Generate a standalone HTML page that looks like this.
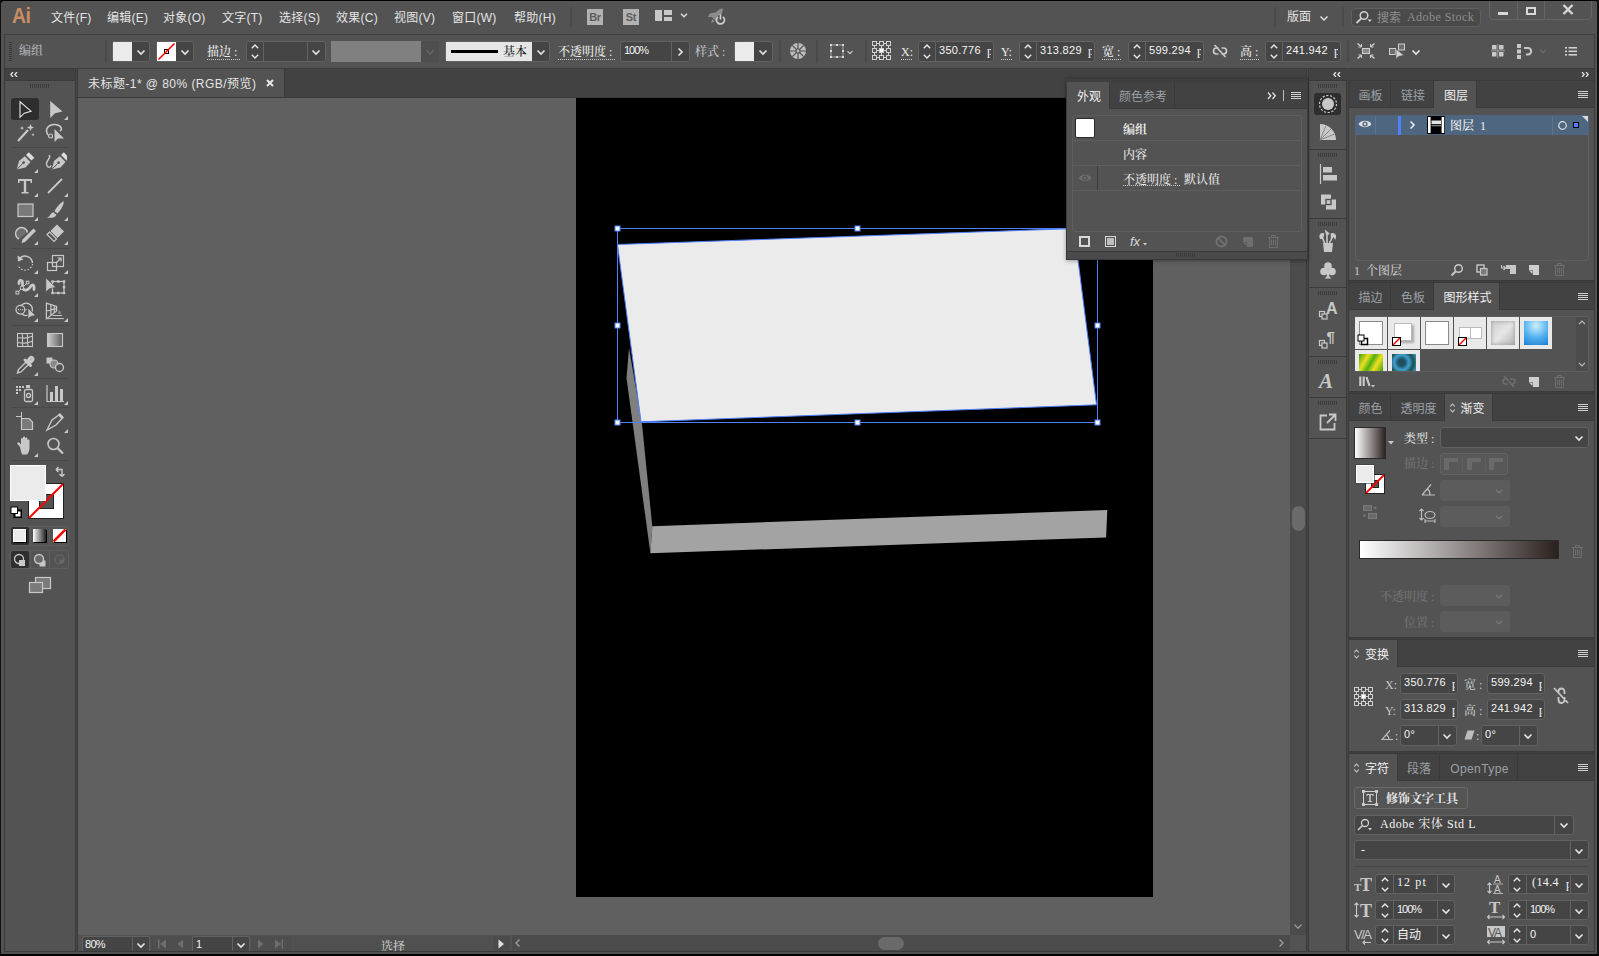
<!DOCTYPE html>
<html lang="zh-CN"><head><meta charset="utf-8"><title>Adobe Illustrator</title>
<style>
html,body{margin:0;padding:0;}
body{width:1599px;height:956px;overflow:hidden;background:#535353;position:relative;}
#root{position:absolute;left:0;top:0;width:1599px;height:956px;overflow:hidden;background:#535353;}
#root div,#root svg{position:absolute;}
#root div{white-space:nowrap;}
.fs{font-family:"Liberation Sans","Noto Sans CJK SC",sans-serif;}
.fr{font-family:"Liberation Serif","Noto Serif CJK SC",serif;font-weight:500;}
.fm{font-family:"Liberation Mono","Noto Sans CJK SC",monospace;}
.u{border-bottom:1px dotted #bbb;}
</style></head>
<body><div id="root">
<div style="left:78px;top:98px;width:1212px;height:838px;background:#606060;"></div>
<div style="left:4px;top:68px;width:1591px;height:30px;background:#424242;"></div>
<div class="fs" style="left:12px;top:3px;font-size:22px;line-height:26px;color:#c98d63;font-weight:bold;letter-spacing:-0.5px;transform:scaleX(0.88);transform-origin:0 0;">Ai</div>
<div class="fs" style="left:51px;top:10px;font-size:12px;line-height:17px;color:#e4e4e4;letter-spacing:0.250px;">文件(F)</div>
<div class="fs" style="left:107px;top:10px;font-size:12px;line-height:17px;color:#e4e4e4;letter-spacing:0.250px;">编辑(E)</div>
<div class="fs" style="left:163px;top:10px;font-size:12px;line-height:17px;color:#e4e4e4;letter-spacing:0.250px;">对象(O)</div>
<div class="fs" style="left:222px;top:10px;font-size:12px;line-height:17px;color:#e4e4e4;letter-spacing:0.250px;">文字(T)</div>
<div class="fs" style="left:279px;top:10px;font-size:12px;line-height:17px;color:#e4e4e4;letter-spacing:0.250px;">选择(S)</div>
<div class="fs" style="left:336px;top:10px;font-size:12px;line-height:17px;color:#e4e4e4;letter-spacing:0.250px;">效果(C)</div>
<div class="fs" style="left:394px;top:10px;font-size:12px;line-height:17px;color:#e4e4e4;letter-spacing:0.250px;">视图(V)</div>
<div class="fs" style="left:452px;top:10px;font-size:12px;line-height:17px;color:#e4e4e4;letter-spacing:0.250px;">窗口(W)</div>
<div class="fs" style="left:514px;top:10px;font-size:12px;line-height:17px;color:#e4e4e4;letter-spacing:0.250px;">帮助(H)</div>
<div style="left:570px;top:7px;width:2px;height:20px;background:#4a4a4a;"></div>
<div style="left:587px;top:9px;width:16px;height:16px;background:#b2b2b2;"></div>
<div class="fs" style="left:587px;top:9px;font-size:11px;line-height:17px;color:#5e5e5e;width:16px;text-align:center;font-weight:bold;letter-spacing:-0.3px;">Br</div>
<div style="left:623px;top:9px;width:16px;height:16px;background:#b2b2b2;"></div>
<div class="fs" style="left:623px;top:9px;font-size:11px;line-height:17px;color:#5e5e5e;width:16px;text-align:center;font-weight:bold;letter-spacing:-0.3px;">St</div>
<svg style="left:655px;top:10px;" width="17" height="11" viewBox="0 0 17 11"><rect x="0" y="0" width="7" height="11" fill="#c8c8c8"/><rect x="9" y="0" width="8" height="5" fill="#c8c8c8"/><rect x="9" y="7" width="8" height="4" fill="#c8c8c8"/></svg>
<svg style="left:678px;top:10px;" width="12" height="10" viewBox="0 0 12 10"><path d="M3 3.8 L6 6.8 L9 3.8" fill="none" stroke="#e0e0e0" stroke-width="1.4"/></svg>
<svg style="left:704px;top:7px;" width="24" height="20" viewBox="0 0 24 20"><g fill="#8c8c8c" transform="rotate(38 12 10)"><path d="M12 -1 C15 2 15.500 8 14.500 13 H9.500 C8.500 8 9 2 12 -1Z"/><path d="M9.300 6 L5 11 L5.500 15 L9.500 12Z"/><path d="M14.700 6 L19 11 L18.500 15 L14.500 12Z"/><path d="M10.500 14 H13.500 L12 18Z"/></g><circle cx="16.5" cy="12.5" r="4.6" fill="#535353"/><g fill="none" stroke="#cfcfcf" stroke-width="1.6"><path d="M14 9.8 A4 4 0 1 0 19 9.8"/><path d="M16.5 7.5 V12.5"/></g></svg>
<div style="left:1274px;top:7px;width:2px;height:20px;background:#4a4a4a;"></div>
<div class="fs" style="left:1287px;top:9px;font-size:12px;line-height:17px;color:#e4e4e4;">版面</div>
<svg style="left:1318px;top:13px;" width="12" height="10" viewBox="0 0 12 10"><path d="M2.5 3.55 L6 7.05 L9.5 3.55" fill="none" stroke="#e0e0e0" stroke-width="1.5"/></svg>
<div style="left:1342px;top:7px;width:2px;height:20px;background:#4a4a4a;"></div>
<div style="left:1351px;top:8px;width:130px;height:19px;background:#4a4a4a;border:1px solid #606060;box-sizing:border-box;border-radius:4px;"></div>
<svg style="left:1355px;top:10px;" width="18" height="15" viewBox="0 0 18 15"><circle cx="9" cy="5.5" r="3.8" fill="none" stroke="#d0d0d0" stroke-width="1.5"/><path d="M6.3 8.3 L1.5 13" stroke="#d0d0d0" stroke-width="1.8"/><path d="M12.5 9.5 H17 L14.75 12 Z" fill="#d0d0d0"/></svg>
<div class="fs" style="left:1377px;top:10px;font-size:12px;line-height:17px;color:#8e8e8e;">搜索</div>
<div class="fr" style="left:1407px;top:9px;font-size:12px;line-height:17px;color:#8e8e8e;letter-spacing:0.450px;font-weight:400;">Adobe Stock</div>
<div style="left:1489px;top:-4px;width:103px;height:24px;border:1px solid #656565;box-sizing:border-box;border-radius:4px;"></div>
<div style="left:1517px;top:0px;width:1px;height:19px;background:#656565;"></div>
<div style="left:1544px;top:0px;width:1px;height:19px;background:#656565;"></div>
<div style="left:1498px;top:12px;width:10px;height:3px;background:#d8d8d8;"></div>
<div style="left:1526px;top:7px;width:10px;height:8px;border:2px solid #d8d8d8;box-sizing:border-box;"></div>
<svg style="left:1562px;top:4px;" width="12" height="11" viewBox="0 0 12 11"><path d="M1.5 1 L10.5 10 M10.5 1 L1.5 10" stroke="#d8d8d8" stroke-width="2.4"/></svg>
<div style="left:4px;top:34px;width:1591px;height:35px;background:#535353;border:1px solid #3e3e3e;box-sizing:border-box;"></div>
<svg style="left:9px;top:42px;" width="4" height="20" viewBox="0 0 4 20"><rect x="0" y="0" width="3" height="1" fill="#3a3a3a"/><rect x="0" y="2" width="3" height="1" fill="#3a3a3a"/><rect x="0" y="4" width="3" height="1" fill="#3a3a3a"/><rect x="0" y="6" width="3" height="1" fill="#3a3a3a"/><rect x="0" y="8" width="3" height="1" fill="#3a3a3a"/><rect x="0" y="10" width="3" height="1" fill="#3a3a3a"/><rect x="0" y="12" width="3" height="1" fill="#3a3a3a"/><rect x="0" y="14" width="3" height="1" fill="#3a3a3a"/><rect x="0" y="16" width="3" height="1" fill="#3a3a3a"/><rect x="0" y="18" width="3" height="1" fill="#3a3a3a"/></svg>
<div class="fr" style="left:19px;top:43px;font-size:12px;line-height:17px;color:#b4b8bd;">编组</div>
<div style="left:105px;top:40px;width:2px;height:23px;background:#4a4a4a;"></div>
<div style="left:112px;top:41px;width:38px;height:21px;background:#454545;border:1px solid #626262;box-sizing:border-box;border-radius:3px;"></div>
<div style="left:113px;top:42px;width:19px;height:19px;background:#ebebeb;"></div>
<svg style="left:135px;top:46.5px;" width="12" height="10" viewBox="0 0 12 10"><path d="M2.5 3.55 L6 7.05 L9.5 3.55" fill="none" stroke="#e6e6e6" stroke-width="1.6"/></svg>
<div style="left:156px;top:41px;width:38px;height:21px;background:#454545;border:1px solid #626262;box-sizing:border-box;border-radius:3px;"></div>
<div style="left:157px;top:42px;width:19px;height:19px;background:#ffffff;"></div>
<svg style="left:157px;top:42px;" width="19" height="19" viewBox="0 0 19 19"><rect x="7.5" y="7.5" width="4" height="4" fill="none" stroke="#000" stroke-width="1"/><path d="M1.5 17.5 L17.5 1.5" stroke="#f00" stroke-width="1.6"/></svg>
<svg style="left:179px;top:46.5px;" width="12" height="10" viewBox="0 0 12 10"><path d="M2.5 3.55 L6 7.05 L9.5 3.55" fill="none" stroke="#e6e6e6" stroke-width="1.6"/></svg>
<div class="fr" style="left:207px;top:44px;font-size:12px;line-height:17px;color:#ececec;">描边 :</div>
<div style="left:207px;top:59px;width:33px;height:0;border-top:1px dotted #c8c8c8;"></div>
<div style="left:246px;top:41px;width:80px;height:21px;background:#454545;border:1px solid #626262;box-sizing:border-box;border-radius:3px;"></div>
<div style="left:263px;top:42px;width:1px;height:19px;background:#626262;"></div>
<div style="left:307px;top:42px;width:1px;height:19px;background:#626262;"></div>
<svg style="left:248.5px;top:42.0px;" width="12" height="10" viewBox="0 0 12 10"><path d="M2.8 6.3 L6 3.1 L9.2 6.3" fill="none" stroke="#e6e6e6" stroke-width="1.4"/></svg>
<svg style="left:248.5px;top:51.0px;" width="12" height="10" viewBox="0 0 12 10"><path d="M2.8 3.6999999999999997 L6 6.8999999999999995 L9.2 3.6999999999999997" fill="none" stroke="#e6e6e6" stroke-width="1.4"/></svg>
<svg style="left:310px;top:46.5px;" width="12" height="10" viewBox="0 0 12 10"><path d="M2.5 3.55 L6 7.05 L9.5 3.55" fill="none" stroke="#e6e6e6" stroke-width="1.6"/></svg>
<div style="left:331px;top:41px;width:90px;height:21px;background:#808080;"></div>
<div style="left:421px;top:41px;width:18px;height:21px;background:#4e4e4e;border-radius:2px;"></div>
<svg style="left:424px;top:46.5px;" width="12" height="10" viewBox="0 0 12 10"><path d="M2.5 3.55 L6 7.05 L9.5 3.55" fill="none" stroke="#666" stroke-width="1.6"/></svg>
<div style="left:445px;top:41px;width:105px;height:21px;background:#454545;border:1px solid #626262;box-sizing:border-box;border-radius:3px;"></div>
<div style="left:446px;top:42px;width:86px;height:19px;background:#e6e6e6;"></div>
<div style="left:451px;top:50px;width:47px;height:3px;background:#000;"></div>
<div class="fr" style="left:503px;top:44px;font-size:12px;line-height:17px;color:#1a1a1a;">基本</div>
<svg style="left:535px;top:46.5px;" width="12" height="10" viewBox="0 0 12 10"><path d="M2.5 3.55 L6 7.05 L9.5 3.55" fill="none" stroke="#e6e6e6" stroke-width="1.6"/></svg>
<div class="fr" style="left:558px;top:44px;font-size:12px;line-height:17px;color:#ececec;">不透明度 :</div>
<div style="left:558px;top:59px;width:57px;height:0;border-top:1px dotted #c8c8c8;"></div>
<div style="left:620px;top:41px;width:70px;height:21px;background:#454545;border:1px solid #626262;box-sizing:border-box;border-radius:3px;"></div>
<div style="left:671px;top:42px;width:1px;height:19px;background:#626262;"></div>
<div class="fs" style="left:624px;top:42px;font-size:11px;line-height:16px;color:#f4f4f4;letter-spacing:-1px;">100%</div>
<svg style="left:675px;top:45.5px;" width="10" height="12" viewBox="0 0 10 12"><path d="M3.55 2.5 L7.05 6 L3.55 9.5" fill="none" stroke="#e6e6e6" stroke-width="1.6"/></svg>
<div class="fr" style="left:695px;top:44px;font-size:12px;line-height:17px;color:#c4c8cc;">样式 :</div>
<div style="left:734px;top:41px;width:39px;height:21px;background:#454545;border:1px solid #626262;box-sizing:border-box;border-radius:3px;"></div>
<div style="left:735px;top:42px;width:19px;height:19px;background:#ebebeb;"></div>
<svg style="left:757px;top:46.5px;" width="12" height="10" viewBox="0 0 12 10"><path d="M2.5 3.55 L6 7.05 L9.5 3.55" fill="none" stroke="#e6e6e6" stroke-width="1.6"/></svg>
<div style="left:779px;top:40px;width:2px;height:23px;background:#4a4a4a;"></div>
<svg style="left:789px;top:42px;" width="18" height="18" viewBox="0 0 18 18"><circle cx="9" cy="9" r="8" fill="#bdbdbd"/><g stroke="#535353" stroke-width="1.2" fill="none"><circle cx="9" cy="9" r="2"/><path d="M9 1 V7 M9 11 V17 M1 9 H7 M11 9 H17 M3.3 3.3 L7.5 7.5 M14.7 3.3 L10.5 7.5 M3.3 14.7 L7.5 10.5 M14.7 14.7 L10.5 10.5"/></g></svg>
<div style="left:816px;top:40px;width:2px;height:23px;background:#4a4a4a;"></div>
<div style="left:865px;top:40px;width:2px;height:23px;background:#4a4a4a;"></div>
<svg style="left:829px;top:43px;" width="16" height="16" viewBox="0 0 16 16"><rect x="2" y="2" width="12" height="12" fill="none" stroke="#c4c4c4" stroke-width="0.8"/><g fill="#d6d6d6"><rect x="1" y="1" width="2" height="2"/><rect x="1" y="7" width="2" height="2"/><rect x="1" y="13" width="2" height="2"/><rect x="7" y="1" width="2" height="2"/><rect x="7" y="13" width="2" height="2"/><rect x="13" y="1" width="2" height="2"/><rect x="13" y="7" width="2" height="2"/><rect x="13" y="13" width="2" height="2"/></g></svg>
<svg style="left:844px;top:47px;" width="12" height="10" viewBox="0 0 12 10"><path d="M3.5 4.05 L6 6.55 L8.5 4.05" fill="none" stroke="#d0d0d0" stroke-width="1.2"/></svg>
<svg style="left:872px;top:41px;" width="19" height="19" viewBox="0 0 19 19"><path d="M5 2.5 H7 M12 2.5 H14 M2.5 5 V7 M2.5 12 V14" stroke="#d0d0d0" stroke-width="1"/><path d="M5 9.5 H7 M12 9.5 H14 M9.5 5 V7 M9.5 12 V14" stroke="#d0d0d0" stroke-width="1"/><path d="M5 16.5 H7 M12 16.5 H14 M16.5 5 V7 M16.5 12 V14" stroke="#d0d0d0" stroke-width="1"/><rect x="0.5" y="0.5" width="4" height="4" fill="none" stroke="#d0d0d0" stroke-width="1"/><rect x="7.5" y="0.5" width="4" height="4" fill="none" stroke="#d0d0d0" stroke-width="1"/><rect x="14.5" y="0.5" width="4" height="4" fill="none" stroke="#d0d0d0" stroke-width="1"/><rect x="0.5" y="7.5" width="4" height="4" fill="none" stroke="#d0d0d0" stroke-width="1"/><rect x="7.5" y="7.5" width="4" height="4" fill="none" stroke="#d0d0d0" stroke-width="1"/><rect x="8.0" y="8.0" width="3" height="3" fill="#fff"/><rect x="14.5" y="7.5" width="4" height="4" fill="none" stroke="#d0d0d0" stroke-width="1"/><rect x="0.5" y="14.5" width="4" height="4" fill="none" stroke="#d0d0d0" stroke-width="1"/><rect x="7.5" y="14.5" width="4" height="4" fill="none" stroke="#d0d0d0" stroke-width="1"/><rect x="14.5" y="14.5" width="4" height="4" fill="none" stroke="#d0d0d0" stroke-width="1"/></svg>
<div class="fr" style="left:901px;top:44px;font-size:12px;line-height:17px;color:#ececec;">X:</div>
<div style="left:901px;top:59px;width:11px;height:0;border-top:1px dotted #c8c8c8;"></div>
<div style="left:918px;top:41px;width:76px;height:21px;background:#454545;border:1px solid #626262;box-sizing:border-box;border-radius:3px;"></div>
<div style="left:935px;top:42px;width:1px;height:19px;background:#626262;"></div>
<svg style="left:921px;top:42.0px;" width="12" height="10" viewBox="0 0 12 10"><path d="M2.8 6.3 L6 3.1 L9.2 6.3" fill="none" stroke="#e6e6e6" stroke-width="1.4"/></svg>
<svg style="left:921px;top:51.0px;" width="12" height="10" viewBox="0 0 12 10"><path d="M2.8 3.6999999999999997 L6 6.8999999999999995 L9.2 3.6999999999999997" fill="none" stroke="#e6e6e6" stroke-width="1.4"/></svg>
<div class="fs" style="left:939px;top:42px;font-size:11px;line-height:16px;color:#f4f4f4;letter-spacing:0.3px;">350.776</div>
<div class="fr" style="left:987px;top:43px;width:4px;height:16px;overflow:hidden;font-size:12px;line-height:16px;color:#f4f4f4;font-weight:500;">px</div>
<div class="fr" style="left:1001px;top:44px;font-size:12px;line-height:17px;color:#ececec;">Y:</div>
<div style="left:1001px;top:59px;width:11px;height:0;border-top:1px dotted #c8c8c8;"></div>
<div style="left:1019px;top:41px;width:76px;height:21px;background:#454545;border:1px solid #626262;box-sizing:border-box;border-radius:3px;"></div>
<div style="left:1036px;top:42px;width:1px;height:19px;background:#626262;"></div>
<svg style="left:1022px;top:42.0px;" width="12" height="10" viewBox="0 0 12 10"><path d="M2.8 6.3 L6 3.1 L9.2 6.3" fill="none" stroke="#e6e6e6" stroke-width="1.4"/></svg>
<svg style="left:1022px;top:51.0px;" width="12" height="10" viewBox="0 0 12 10"><path d="M2.8 3.6999999999999997 L6 6.8999999999999995 L9.2 3.6999999999999997" fill="none" stroke="#e6e6e6" stroke-width="1.4"/></svg>
<div class="fs" style="left:1040px;top:42px;font-size:11px;line-height:16px;color:#f4f4f4;letter-spacing:0.3px;">313.829</div>
<div class="fr" style="left:1088px;top:43px;width:4px;height:16px;overflow:hidden;font-size:12px;line-height:16px;color:#f4f4f4;font-weight:500;">px</div>
<div class="fr" style="left:1102px;top:44px;font-size:12px;line-height:17px;color:#ececec;">宽 :</div>
<div style="left:1102px;top:59px;width:19px;height:0;border-top:1px dotted #c8c8c8;"></div>
<div style="left:1128px;top:41px;width:76px;height:21px;background:#454545;border:1px solid #626262;box-sizing:border-box;border-radius:3px;"></div>
<div style="left:1145px;top:42px;width:1px;height:19px;background:#626262;"></div>
<svg style="left:1131px;top:42.0px;" width="12" height="10" viewBox="0 0 12 10"><path d="M2.8 6.3 L6 3.1 L9.2 6.3" fill="none" stroke="#e6e6e6" stroke-width="1.4"/></svg>
<svg style="left:1131px;top:51.0px;" width="12" height="10" viewBox="0 0 12 10"><path d="M2.8 3.6999999999999997 L6 6.8999999999999995 L9.2 3.6999999999999997" fill="none" stroke="#e6e6e6" stroke-width="1.4"/></svg>
<div class="fs" style="left:1149px;top:42px;font-size:11px;line-height:16px;color:#f4f4f4;letter-spacing:0.3px;">599.294</div>
<div class="fr" style="left:1197px;top:43px;width:4px;height:16px;overflow:hidden;font-size:12px;line-height:16px;color:#f4f4f4;font-weight:500;">px</div>
<svg style="left:1212px;top:44px;" width="16" height="14" viewBox="0 0 16 14"><g fill="none" stroke="#c8c8c8" stroke-width="1.700"><path d="M6.500 4 H4.500 a3 3 0 0 0 0 6 H6.500"/><path d="M9.500 4 H11.500 a3 3 0 0 1 0 6 H9.500"/><path d="M2.500 1 L13.500 13"/></g></svg>
<div class="fr" style="left:1240px;top:44px;font-size:12px;line-height:17px;color:#ececec;">高 :</div>
<div style="left:1240px;top:59px;width:19px;height:0;border-top:1px dotted #c8c8c8;"></div>
<div style="left:1265px;top:41px;width:76px;height:21px;background:#454545;border:1px solid #626262;box-sizing:border-box;border-radius:3px;"></div>
<div style="left:1282px;top:42px;width:1px;height:19px;background:#626262;"></div>
<svg style="left:1268px;top:42.0px;" width="12" height="10" viewBox="0 0 12 10"><path d="M2.8 6.3 L6 3.1 L9.2 6.3" fill="none" stroke="#e6e6e6" stroke-width="1.4"/></svg>
<svg style="left:1268px;top:51.0px;" width="12" height="10" viewBox="0 0 12 10"><path d="M2.8 3.6999999999999997 L6 6.8999999999999995 L9.2 3.6999999999999997" fill="none" stroke="#e6e6e6" stroke-width="1.4"/></svg>
<div class="fs" style="left:1286px;top:42px;font-size:11px;line-height:16px;color:#f4f4f4;letter-spacing:0.3px;">241.942</div>
<div class="fr" style="left:1334px;top:43px;width:4px;height:16px;overflow:hidden;font-size:12px;line-height:16px;color:#f4f4f4;font-weight:500;">px</div>
<div style="left:1347px;top:40px;width:2px;height:23px;background:#4a4a4a;"></div>
<svg style="left:1357px;top:43px;" width="18" height="16" viewBox="0 0 18 16"><rect x="5.500" y="5.500" width="7" height="5" fill="#8a8a8a" stroke="#d0d0d0"/><path d="M0.500 0.500 L4 3.500 M17.500 0.500 L14 3.500 M0.500 15.500 L4 12.500 M17.500 15.500 L14 12.500" stroke="#d0d0d0" stroke-width="1.400"/><path d="M1.500 4 H4.500 V1 M16.500 4 H13.500 V1 M1.500 12 H4.500 V15 M16.500 12 H13.500 V15" stroke="#d0d0d0" stroke-width="1" fill="none"/></svg>
<svg style="left:1389px;top:43px;" width="17" height="17" viewBox="0 0 17 17"><rect x="0.500" y="5.500" width="6" height="6" fill="#6e6e6e" stroke="#d0d0d0"/><rect x="9.500" y="1" width="6" height="6" fill="#6e6e6e" stroke="#d0d0d0"/><path d="M7 6 V16 L9.500 13.500 L15 12.300 Z" fill="#d0d0d0" stroke="#535353" stroke-width="0.600"/></svg>
<svg style="left:1410px;top:46.5px;" width="12" height="10" viewBox="0 0 12 10"><path d="M2.5 3.55 L6 7.05 L9.5 3.55" fill="none" stroke="#e6e6e6" stroke-width="1.6"/></svg>
<svg style="left:1491px;top:44px;" width="14" height="14" viewBox="0 0 14 14"><g fill="#c8c8c8"><rect x="1" y="1" width="4.5" height="4.5"/><rect x="8" y="1" width="4.5" height="4.5"/><rect x="1" y="8" width="4.5" height="4.5"/><rect x="8" y="8" width="4.5" height="4.5"/></g><path d="M6.75 0 V14 M0 6.75 H14" stroke="#c8c8c8" stroke-width="0.6"/></svg>
<svg style="left:1517px;top:44px;" width="16" height="15" viewBox="0 0 16 15"><g fill="#c8c8c8"><rect x="0" y="0" width="4" height="4"/><rect x="0" y="5.5" width="4" height="4"/><rect x="0" y="11" width="4" height="4"/></g><path d="M7 4 H11 a3.2 3.2 0 0 1 0 6.4 H9" fill="none" stroke="#c8c8c8" stroke-width="2"/></svg>
<svg style="left:1537px;top:46px;" width="12" height="10" viewBox="0 0 12 10"><path d="M3 3.8 L6 6.8 L9 3.8" fill="none" stroke="#6a6a6a" stroke-width="1.3"/></svg>
<svg style="left:1565px;top:47px;" width="13" height="9" viewBox="0 0 13 9"><rect x="0" y="0.0" width="2" height="1.6" fill="#d0d0d0"/><rect x="3.5" y="0.0" width="8.5" height="1.6" fill="#d0d0d0"/><rect x="0" y="3.5" width="2" height="1.6" fill="#d0d0d0"/><rect x="3.5" y="3.5" width="8.5" height="1.6" fill="#d0d0d0"/><rect x="0" y="7.0" width="2" height="1.6" fill="#d0d0d0"/><rect x="3.5" y="7.0" width="8.5" height="1.6" fill="#d0d0d0"/></svg>
<div style="left:4px;top:68px;width:72px;height:884px;background:#535353;border:1px solid #3a3a3a;box-sizing:border-box;"></div>
<div style="left:5px;top:69px;width:70px;height:11px;background:#424242;"></div>
<div style="left:5px;top:80px;width:70px;height:1px;background:#3a3a3a;"></div>
<svg style="left:10px;top:72px;" width="8" height="5" viewBox="0 0 8 5"><path d="M3 0 L0.8 2.5 L3 5 M7 0 L4.8 2.5 L7 5" fill="none" stroke="#e0e0e0" stroke-width="1.3"/></svg>
<svg style="left:30px;top:84px;" width="20" height="4" viewBox="0 0 20 4"><rect x="0" y="0" width="1" height="4" fill="#3c3c3c"/><rect x="2" y="0" width="1" height="4" fill="#3c3c3c"/><rect x="4" y="0" width="1" height="4" fill="#3c3c3c"/><rect x="6" y="0" width="1" height="4" fill="#3c3c3c"/><rect x="8" y="0" width="1" height="4" fill="#3c3c3c"/><rect x="10" y="0" width="1" height="4" fill="#3c3c3c"/><rect x="12" y="0" width="1" height="4" fill="#3c3c3c"/><rect x="14" y="0" width="1" height="4" fill="#3c3c3c"/><rect x="16" y="0" width="1" height="4" fill="#3c3c3c"/><rect x="18" y="0" width="1" height="4" fill="#3c3c3c"/></svg>
<div style="left:11px;top:98px;width:28px;height:22px;background:#2e2e2e;border-radius:3px;"></div>
<svg style="left:13px;top:97px;" width="24" height="24" viewBox="0 0 24 24"><path d="M7 4.800 L7 20.300 L11.300 16.200 L18 14.200 Z" fill="none" stroke="#e8e8e8" stroke-width="1.1" stroke-linejoin="miter"/></svg>
<svg style="left:43px;top:97px;" width="24" height="24" viewBox="0 0 24 24"><path d="M7.200 4 L7.200 21 L12 16.300 L19.500 14.500 Z" fill="#c8c8c8"/></svg>
<svg style="left:64px;top:116px;" width="4" height="4" viewBox="0 0 4 4"><path d="M4 0 V4 H0 Z" fill="#c8c8c8"/></svg>
<svg style="left:13px;top:121px;" width="24" height="24" viewBox="0 0 24 24"><path d="M5 20 L15 9" stroke="#c8c8c8" stroke-width="2.2"/><path d="M17.5 3 l1 2.6 2.6 1 -2.6 1 -1 2.6 -1 -2.6 -2.6 -1 2.6 -1z M9 5 l.6 1.5 1.5 .6 -1.5 .6 -.6 1.5 -.6 -1.5 -1.5 -.6 1.5 -.6z M20 12 l.5 1.2 1.2 .5 -1.2 .5 -.5 1.2 -.5 -1.2 -1.2 -.5 1.2 -.5z" fill="#c8c8c8"/></svg>
<svg style="left:43px;top:121px;" width="24" height="24" viewBox="0 0 24 24"><path d="M5 14 C1 8 6 3 12 3.5 C18 4 20 8 17 10" fill="none" stroke="#c8c8c8" stroke-width="1.6"/><circle cx="7.5" cy="15" r="2" fill="none" stroke="#c8c8c8" stroke-width="1.2"/><path d="M11.5 8 L11.5 21 L15 17.5 L21 17.5 Z" fill="#c8c8c8"/></svg>
<div style="left:11px;top:147px;width:58px;height:1px;background:#484848;"></div>
<svg style="left:13px;top:150px;" width="24" height="24" viewBox="0 0 24 24"><path d="M3.700 19.500 L6 11 L11.800 6.200 L17.500 12 L12.500 17.500 Z" fill="#c8c8c8"/><path d="M13 5 L15.800 2.200 L21.300 7.700 L18.500 10.500 Z" fill="#dcdcdc"/><path d="M3.700 19.500 L10 13.200" stroke="#535353" stroke-width="1"/><circle cx="10.600" cy="12.600" r="1.300" fill="#535353"/></svg>
<svg style="left:34px;top:169px;" width="4" height="4" viewBox="0 0 4 4"><path d="M4 0 V4 H0 Z" fill="#c8c8c8"/></svg>
<svg style="left:43px;top:150px;" width="24" height="24" viewBox="0 0 24 24"><g transform="translate(5,0)"><path d="M3.700 19.500 L6 11 L11.800 6.200 L17.500 12 L12.500 17.500 Z" fill="#c8c8c8"/><path d="M13 5 L15.800 2.200 L21.300 7.700 L18.500 10.500 Z" fill="#dcdcdc"/><path d="M3.700 19.500 L10 13.200" stroke="#535353" stroke-width="1"/><circle cx="10.600" cy="12.600" r="1.300" fill="#535353"/></g><path d="M6 5 C9 8 3 10 3.500 14 C4 18 7 18 8 15.500" fill="none" stroke="#c8c8c8" stroke-width="1.4"/></svg>
<svg style="left:13px;top:174px;" width="24" height="24" viewBox="0 0 24 24"><path d="M5 5 H19 V9 H17.5 V7 H13.2 V18 H15.5 V19.5 H8.5 V18 H10.8 V7 H6.5 V9 H5 Z" fill="#c8c8c8"/></svg>
<svg style="left:34px;top:193px;" width="4" height="4" viewBox="0 0 4 4"><path d="M4 0 V4 H0 Z" fill="#c8c8c8"/></svg>
<svg style="left:43px;top:174px;" width="24" height="24" viewBox="0 0 24 24"><path d="M5 19 L19 5" stroke="#c8c8c8" stroke-width="1.8"/></svg>
<svg style="left:64px;top:193px;" width="4" height="4" viewBox="0 0 4 4"><path d="M4 0 V4 H0 Z" fill="#c8c8c8"/></svg>
<svg style="left:13px;top:198px;" width="24" height="24" viewBox="0 0 24 24"><rect x="5" y="6" width="15" height="12.5" fill="#7a7a7a" stroke="#c8c8c8" stroke-width="1.2"/></svg>
<svg style="left:34px;top:217px;" width="4" height="4" viewBox="0 0 4 4"><path d="M4 0 V4 H0 Z" fill="#c8c8c8"/></svg>
<svg style="left:43px;top:198px;" width="24" height="24" viewBox="0 0 24 24"><path d="M20.800 3 C17 5 13 10 11.500 13.200 L14.300 15.600 C17.500 12.500 20.800 7.500 20.800 3 Z" fill="#c8c8c8"/><path d="M10.500 14.200 L13.400 16.700 C12 20 8 20 4 19.500 C7.500 18.500 7 15 10.500 14.200 Z" fill="#c8c8c8"/></svg>
<svg style="left:64px;top:217px;" width="4" height="4" viewBox="0 0 4 4"><path d="M4 0 V4 H0 Z" fill="#c8c8c8"/></svg>
<svg style="left:13px;top:222px;" width="24" height="24" viewBox="0 0 24 24"><path d="M6 17 A6 6 0 1 1 14.500 10.500" fill="#6e6e6e" stroke="#c8c8c8" stroke-width="1.4"/><path d="M9.500 17.500 L20.500 6.500 L23 9 L12 20 L8.500 21 Z" fill="#c8c8c8"/></svg>
<svg style="left:34px;top:241px;" width="4" height="4" viewBox="0 0 4 4"><path d="M4 0 V4 H0 Z" fill="#c8c8c8"/></svg>
<svg style="left:43px;top:222px;" width="24" height="24" viewBox="0 0 24 24"><path d="M14 2.500 L21 9.500 L14.500 16 L7.500 9 Z" fill="#c8c8c8"/><path d="M6.500 10 L13.500 17 L11 19.500 L4 12.500 Z" fill="none" stroke="#c8c8c8" stroke-width="1.2"/></svg>
<svg style="left:64px;top:241px;" width="4" height="4" viewBox="0 0 4 4"><path d="M4 0 V4 H0 Z" fill="#c8c8c8"/></svg>
<div style="left:11px;top:248px;width:58px;height:1px;background:#484848;"></div>
<svg style="left:13px;top:251px;" width="24" height="24" viewBox="0 0 24 24"><path d="M7 7 A7.5 7.5 0 0 1 19.5 12" fill="none" stroke="#c8c8c8" stroke-width="1.5"/><path d="M4.5 4.5 L5 10.5 L10.5 8.5 Z" fill="#c8c8c8"/><path d="M19.5 13 A7.5 7.5 0 0 1 5 14" fill="none" stroke="#c8c8c8" stroke-width="1.2" stroke-dasharray="1.5 1.7"/></svg>
<svg style="left:34px;top:270px;" width="4" height="4" viewBox="0 0 4 4"><path d="M4 0 V4 H0 Z" fill="#c8c8c8"/></svg>
<svg style="left:43px;top:251px;" width="24" height="24" viewBox="0 0 24 24"><g fill="none" stroke="#c8c8c8" stroke-width="1.2"><rect x="4.5" y="11.5" width="9" height="8"/><rect x="9.5" y="4.5" width="11" height="11"/><path d="M13 12 L18 7 M14.5 7 H18 V10.5"/></g></svg>
<svg style="left:64px;top:270px;" width="4" height="4" viewBox="0 0 4 4"><path d="M4 0 V4 H0 Z" fill="#c8c8c8"/></svg>
<svg style="left:13px;top:274px;" width="24" height="24" viewBox="0 0 24 24"><path d="M6 9.500 C5.500 5 10 5.500 9.500 10 C9 14 10 16.500 13.500 16 C17.500 15.500 17 10.500 20 11 C21.500 11.500 21 14 21 15.500" fill="none" stroke="#c8c8c8" stroke-width="2.800" stroke-linecap="round"/><path d="M4.500 18.500 L14.600 8.500" stroke="#c8c8c8" stroke-width="1"/><rect x="3" y="17.200" width="2.800" height="2.800" fill="#535353" stroke="#c8c8c8" stroke-width="1"/><rect x="13.300" y="7.200" width="2.600" height="2.600" fill="#535353" stroke="#c8c8c8" stroke-width="1"/><circle cx="8.900" cy="13.800" r="1.700" fill="#535353" stroke="#c8c8c8" stroke-width="1"/></svg>
<svg style="left:34px;top:293px;" width="4" height="4" viewBox="0 0 4 4"><path d="M4 0 V4 H0 Z" fill="#c8c8c8"/></svg>
<svg style="left:43px;top:274px;" width="24" height="24" viewBox="0 0 24 24"><rect x="9.500" y="7.500" width="11.500" height="11.500" fill="none" stroke="#c8c8c8" stroke-width="1.200"/><g fill="#c8c8c8"><rect x="8.3" y="6.3" width="2.400" height="2.400"/><rect x="14.05" y="6.3" width="2.400" height="2.400"/><rect x="19.8" y="6.3" width="2.400" height="2.400"/><rect x="19.8" y="12.05" width="2.400" height="2.400"/><rect x="19.8" y="17.8" width="2.400" height="2.400"/><rect x="14.05" y="17.8" width="2.400" height="2.400"/><rect x="8.3" y="17.8" width="2.400" height="2.400"/></g><path d="M2.900 3.900 V18.100 L6.300 14.800 L12.700 13.300 Z" fill="#c8c8c8" stroke="#535353" stroke-width="0.600"/></svg>
<svg style="left:13px;top:299px;" width="24" height="24" viewBox="0 0 24 24"><circle cx="13.200" cy="10.400" r="6.200" fill="none" stroke="#c8c8c8" stroke-width="1.300"/><circle cx="7.400" cy="10.700" r="4.400" fill="#535353" stroke="#c8c8c8" stroke-width="1.300"/><path d="M5 10.600 H14.200" stroke="#c8c8c8" stroke-width="1.300" stroke-dasharray="1 1.100"/><path d="M15 9.200 V20.200 L17.600 17.600 L22.700 16.400 Z" fill="#c8c8c8" stroke="#535353" stroke-width="0.800"/></svg>
<svg style="left:34px;top:318px;" width="4" height="4" viewBox="0 0 4 4"><path d="M4 0 V4 H0 Z" fill="#c8c8c8"/></svg>
<svg style="left:43px;top:299px;" width="24" height="24" viewBox="0 0 24 24"><path d="M14.700 14.800 L16 11.400 H17 L18.300 14.800 Z" fill="#8a8a8a"/><g fill="none" stroke="#c8c8c8" stroke-width="1.200"><path d="M3.400 4.100 V19.900 L13.600 12 V7.500 Z"/><path d="M7.900 5.600 V16.400 M11.300 6.700 V13.800 M3.400 12 L13.600 9.700"/><path d="M9.600 16.500 H19.200 M4.500 19.600 H20.900" stroke-width="1"/></g></svg>
<svg style="left:64px;top:318px;" width="4" height="4" viewBox="0 0 4 4"><path d="M4 0 V4 H0 Z" fill="#c8c8c8"/></svg>
<div style="left:11px;top:325px;width:58px;height:1px;background:#484848;"></div>
<svg style="left:13px;top:328px;" width="24" height="24" viewBox="0 0 24 24"><g fill="none" stroke="#c8c8c8" stroke-width="1.1"><rect x="4.500" y="5.500" width="15" height="13"/><path d="M4.500 10 C9 9 12 12 19.500 8 M4.500 15 C9 14 13 17 19.500 13 M9 5.500 C11 10 8 14 10 18.500 M14 5.500 C16 10 13 14 15.500 18.500"/></g></svg>
<svg style="left:43px;top:328px;" width="24" height="24" viewBox="0 0 24 24"><defs><linearGradient id="tg"><stop offset="0" stop-color="#cfcfcf"/><stop offset="1" stop-color="#5c5c5c"/></linearGradient></defs><rect x="4.500" y="5.500" width="15" height="13" fill="url(#tg)" stroke="#c8c8c8" stroke-width="1.1"/></svg>
<svg style="left:13px;top:352.5px;" width="24" height="24" viewBox="0 0 24 24"><path d="M4.500 20 L5.500 16.500 L13 9 L15.500 11.500 L8 19 Z" fill="none" stroke="#c8c8c8" stroke-width="1.4"/><path d="M12 7 L17.500 12.500 M14 9 L17 5 C18.500 3.500 21 5.500 19.500 7.500 L16 10.500" stroke="#c8c8c8" stroke-width="3" fill="none" stroke-linecap="round"/></svg>
<svg style="left:34px;top:371.5px;" width="4" height="4" viewBox="0 0 4 4"><path d="M4 0 V4 H0 Z" fill="#c8c8c8"/></svg>
<svg style="left:43px;top:352.5px;" width="24" height="24" viewBox="0 0 24 24"><rect x="3.500" y="4.500" width="6" height="6" fill="#c8c8c8"/><circle cx="11" cy="11" r="4" fill="#8a8a8a" stroke="#c8c8c8" stroke-width="1.1"/><circle cx="16.500" cy="14.500" r="4" fill="#535353" stroke="#c8c8c8" stroke-width="1.3"/></svg>
<div style="left:11px;top:378px;width:58px;height:1px;background:#484848;"></div>
<svg style="left:13px;top:381.7px;" width="24" height="24" viewBox="0 0 24 24"><g fill="#c8c8c8"><rect x="3" y="4" width="2" height="2"/><rect x="6" y="4" width="2" height="2"/><rect x="9" y="4" width="2" height="2"/><rect x="3" y="7" width="2" height="2"/><rect x="6" y="7" width="2" height="2"/><rect x="3" y="10" width="2" height="2"/><rect x="13" y="3" width="4" height="3"/></g><rect x="11.500" y="7.500" width="8" height="12" rx="1.5" fill="none" stroke="#c8c8c8" stroke-width="1.3"/><circle cx="15.500" cy="13.500" r="2" fill="none" stroke="#c8c8c8" stroke-width="1.3"/></svg>
<svg style="left:34px;top:400.7px;" width="4" height="4" viewBox="0 0 4 4"><path d="M4 0 V4 H0 Z" fill="#c8c8c8"/></svg>
<svg style="left:43px;top:381.7px;" width="24" height="24" viewBox="0 0 24 24"><path d="M4 3 V19.500 H21" fill="none" stroke="#c8c8c8" stroke-width="1.2"/><g fill="#c8c8c8"><rect x="7" y="10" width="3" height="9"/><rect x="12" y="4" width="3" height="15"/><rect x="17" y="7" width="3" height="12"/></g></svg>
<svg style="left:64px;top:400.7px;" width="4" height="4" viewBox="0 0 4 4"><path d="M4 0 V4 H0 Z" fill="#c8c8c8"/></svg>
<div style="left:11px;top:407px;width:58px;height:1px;background:#484848;"></div>
<svg style="left:13px;top:410px;" width="24" height="24" viewBox="0 0 24 24"><path d="M8.500 2 V8 M3 6.500 H8" stroke="#c8c8c8" stroke-width="1"/><path d="M8.500 8.500 H16 L19.500 12 V19.500 H8.500 Z" fill="#7a7a7a" stroke="#c8c8c8" stroke-width="1.2"/></svg>
<svg style="left:43px;top:410px;" width="24" height="24" viewBox="0 0 24 24"><path d="M4 20 L9 10 L16 5 L19 8.500 L13 15 Z" fill="none" stroke="#c8c8c8" stroke-width="1.4"/><path d="M15 4.500 L17 3 L21 7.500 L19.500 9 Z" fill="#c8c8c8"/></svg>
<svg style="left:64px;top:429px;" width="4" height="4" viewBox="0 0 4 4"><path d="M4 0 V4 H0 Z" fill="#c8c8c8"/></svg>
<svg style="left:13px;top:434px;" width="24" height="24" viewBox="0 0 24 24"><path d="M7 13 L4.500 10 C3.500 8.500 5.500 7.500 6.500 8.800 L8 10.500 V5 C8 3.500 10 3.500 10 5 V9 V3.500 C10 2 12.200 2 12.200 3.500 V9 V4.500 C12.200 3 14.400 3 14.400 4.500 V10 V6.500 C14.400 5 16.500 5 16.500 6.500 V14 C16.500 17 15 19.500 14 20.500 H9 C8 18 7.500 15 7 13 Z" fill="#c8c8c8"/></svg>
<svg style="left:34px;top:453px;" width="4" height="4" viewBox="0 0 4 4"><path d="M4 0 V4 H0 Z" fill="#c8c8c8"/></svg>
<svg style="left:43px;top:434px;" width="24" height="24" viewBox="0 0 24 24"><circle cx="10.500" cy="10" r="5.500" fill="none" stroke="#c8c8c8" stroke-width="1.6"/><path d="M14.500 14 L20 19.500" stroke="#c8c8c8" stroke-width="2.2"/></svg>
<div style="left:11px;top:460px;width:58px;height:1px;background:#484848;"></div>
<div style="left:28px;top:483px;width:36px;height:36px;background:#fff;border:1px solid #222;box-sizing:border-box;"></div>
<div style="left:39px;top:494px;width:15px;height:15px;background:#535353;border:1px solid #222;box-sizing:border-box;"></div>
<svg style="left:28px;top:483px;" width="36" height="36" viewBox="0 0 36 36"><path d="M1 35 L35 1" stroke="#f00" stroke-width="2"/></svg>
<div style="left:10px;top:465px;width:36px;height:36px;background:#ebebeb;border:1px solid #fff;box-sizing:border-box;"></div>
<svg style="left:54px;top:466px;" width="12" height="12" viewBox="0 0 12 12"><path d="M2 3.500 H8 V10.500 M2 3.500 L4.500 1 M2 3.500 L4.500 6 M8 10.500 L5.500 8 M8 10.500 L10.500 8" fill="none" stroke="#c8c8c8" stroke-width="1.4"/></svg>
<svg style="left:10px;top:506px;" width="12" height="12" viewBox="0 0 12 12"><rect x="4.500" y="4.500" width="7" height="7" fill="#fff" stroke="#000" stroke-width="2"/><rect x="1" y="1" width="6.500" height="6.500" fill="#fff" stroke="#000" stroke-width="1"/></svg>
<div style="left:10px;top:526px;width:59px;height:20px;border:1px solid #5e5e5e;box-sizing:border-box;border-radius:3px;"></div>
<div style="left:11px;top:527px;width:18px;height:18px;background:#2e2e2e;border-radius:2px;"></div>
<div style="left:30px;top:527px;width:1px;height:18px;background:#5e5e5e;"></div>
<div style="left:49px;top:527px;width:1px;height:18px;background:#5e5e5e;"></div>
<div style="left:13px;top:529px;width:13px;height:13px;background:#ebebeb;border:1px solid #fff;box-sizing:border-box;box-shadow:1px 1px 0 #000;"></div>
<div style="left:33px;top:529px;width:13px;height:13px;background:linear-gradient(90deg,#fff,#222);box-shadow:1px 1px 0 #000;"></div>
<div style="left:53px;top:529px;width:13px;height:13px;background:#fff;box-shadow:1px 1px 0 #000;"></div>
<svg style="left:53px;top:529px;" width="13" height="13" viewBox="0 0 13 13"><path d="M0.500 12.500 L12.500 0.500" stroke="#f00" stroke-width="2.6"/></svg>
<div style="left:10px;top:550px;width:59px;height:19px;border:1px solid #5e5e5e;box-sizing:border-box;border-radius:3px;"></div>
<div style="left:11px;top:551px;width:18px;height:17px;background:#2e2e2e;border-radius:2px;"></div>
<div style="left:30px;top:551px;width:1px;height:17px;background:#5e5e5e;"></div>
<div style="left:49px;top:551px;width:1px;height:17px;background:#5e5e5e;"></div>
<svg style="left:13px;top:553px;" width="14" height="14" viewBox="0 0 14 14"><circle cx="6" cy="6" r="4.500" fill="#2e2e2e" stroke="#c8c8c8" stroke-width="1.3"/><rect x="6" y="7" width="6" height="6" fill="#c8c8c8"/></svg>
<svg style="left:33px;top:553px;" width="14" height="14" viewBox="0 0 14 14"><rect x="6.500" y="7.500" width="6" height="6" fill="#c8c8c8"/><circle cx="6" cy="6" r="4.500" fill="#6a6a6a" stroke="#c8c8c8" stroke-width="1.3"/></svg>
<svg style="left:53px;top:553px;" width="14" height="14" viewBox="0 0 14 14"><circle cx="6.500" cy="6.500" r="4.500" fill="none" stroke="#6a6a6a" stroke-width="1.2"/><path d="M6.500 6.500 H11 V10 H6.500Z" fill="#6a6a6a"/></svg>
<svg style="left:28px;top:576px;" width="24" height="18" viewBox="0 0 24 18"><rect x="7.500" y="1.500" width="15" height="11" fill="#7a7a7a" stroke="#c8c8c8" stroke-width="1.2"/><rect x="1.500" y="6.500" width="13" height="10" fill="#7a7a7a" stroke="#c8c8c8" stroke-width="1.2"/></svg>
<div style="left:76px;top:68px;width:1px;height:884px;background:#484848;"></div>
<div style="left:77px;top:68px;width:1px;height:884px;background:#3a3a3a;"></div>
<div style="left:78px;top:69px;width:206px;height:29px;background:#535353;"></div>
<div style="left:284px;top:69px;width:1px;height:28px;background:#3a3a3a;"></div>
<div style="left:78px;top:97px;width:1213px;height:1px;background:#3a3a3a;"></div>
<div class="fs" style="left:88px;top:76px;font-size:12px;line-height:17px;color:#e4e4e4;letter-spacing:0.45px;">未标题-1* @ 80% (RGB/预览)</div>
<svg style="left:266px;top:79px;" width="8" height="8" viewBox="0 0 8 8"><path d="M1 1 L7 7 M7 1 L1 7" stroke="#e8e8e8" stroke-width="2"/></svg>
<div style="left:576px;top:98px;width:577px;height:799px;background:#000;"></div>
<svg style="left:0px;top:0px;" width="1599" height="956" viewBox="0 0 1599 956"><polygon points="629,348 626.5,378 650.4,553.3 652.3,526.2 642,424" fill="#7f7f7f"/>
<polygon points="652.3,526.2 1107.3,510 1106.1,537.5 650.4,553.3" fill="#a3a3a3"/>
<polygon points="617.5,244.5 1074,228.6 1096.5,404.8 641,421.8" fill="#ebebeb" stroke="#4f80ff" stroke-width="1"/>
<rect x="617.5" y="228.500" width="480" height="194" fill="none" stroke="#4f80ff" stroke-width="1"/><rect x="615" y="226" width="5" height="5" fill="#fff" stroke="#4f80ff" stroke-width="1"/><rect x="855" y="226" width="5" height="5" fill="#fff" stroke="#4f80ff" stroke-width="1"/><rect x="1095" y="226" width="5" height="5" fill="#fff" stroke="#4f80ff" stroke-width="1"/><rect x="615" y="323" width="5" height="5" fill="#fff" stroke="#4f80ff" stroke-width="1"/><rect x="1095" y="323" width="5" height="5" fill="#fff" stroke="#4f80ff" stroke-width="1"/><rect x="615" y="420" width="5" height="5" fill="#fff" stroke="#4f80ff" stroke-width="1"/><rect x="855" y="420" width="5" height="5" fill="#fff" stroke="#4f80ff" stroke-width="1"/><rect x="1095" y="420" width="5" height="5" fill="#fff" stroke="#4f80ff" stroke-width="1"/></svg>
<div style="left:1290px;top:98px;width:16px;height:838px;background:#4b4b4b;"></div>
<div style="left:1306px;top:68px;width:1px;height:884px;background:#3a3a3a;"></div>
<div style="left:1307px;top:68px;width:1px;height:884px;background:#484848;"></div>
<div style="left:1292px;top:506px;width:13px;height:25px;background:#6a6a6a;border-radius:7px;"></div>
<svg style="left:1292px;top:921px;" width="12" height="10" viewBox="0 0 12 10"><path d="M2.5 3.55 L6 7.05 L9.5 3.55" fill="none" stroke="#a4a4a4" stroke-width="1.2"/></svg>
<div style="left:78px;top:935px;width:1228px;height:17px;background:#4b4b4b;"></div>
<div style="left:78px;top:935px;width:434px;height:17px;background:#535353;"></div>
<div style="left:82px;top:936px;width:68px;height:16px;background:#454545;border:1px solid #626262;box-sizing:border-box;border-radius:2px;"></div>
<div style="left:132px;top:937px;width:1px;height:14px;background:#626262;"></div>
<div class="fs" style="left:85px;top:936px;font-size:11px;line-height:16px;color:#f4f4f4;letter-spacing:-0.7px;">80%</div>
<svg style="left:135px;top:939.5px;" width="12" height="10" viewBox="0 0 12 10"><path d="M2.5 3.55 L6 7.05 L9.5 3.55" fill="none" stroke="#e6e6e6" stroke-width="1.6"/></svg>
<div style="left:151px;top:936px;width:41px;height:16px;background:#4e4e4e;"></div>
<svg style="left:158px;top:939px;" width="30" height="10" viewBox="0 0 30 10"><g fill="#6e6e6e"><rect x="0" y="0.500" width="1.500" height="9"/><path d="M8 0.500 V9.500 L2 5 Z"/><path d="M25 0.500 V9.500 L19.500 5 Z"/></g></svg>
<div style="left:192px;top:936px;width:58px;height:16px;background:#454545;border:1px solid #626262;box-sizing:border-box;border-radius:2px;"></div>
<div style="left:232px;top:937px;width:1px;height:14px;background:#626262;"></div>
<div class="fs" style="left:196px;top:936px;font-size:11px;line-height:16px;color:#f4f4f4;letter-spacing:0.3px;">1</div>
<svg style="left:235px;top:939.5px;" width="12" height="10" viewBox="0 0 12 10"><path d="M2.5 3.55 L6 7.05 L9.5 3.55" fill="none" stroke="#e6e6e6" stroke-width="1.6"/></svg>
<div style="left:251px;top:936px;width:41px;height:16px;background:#4e4e4e;"></div>
<svg style="left:258px;top:939px;" width="30" height="10" viewBox="0 0 30 10"><g fill="#6e6e6e"><path d="M0 0.500 V9.500 L5.500 5 Z"/><path d="M17 0.500 V9.500 L23 5 Z"/><rect x="23.500" y="0.500" width="1.500" height="9"/></g></svg>
<div style="left:293px;top:936px;width:200px;height:16px;background:#505050;"></div>
<div class="fr" style="left:293px;top:939px;font-size:12px;line-height:16px;color:#c8c8c8;width:200px;text-align:center;">选择</div>
<div style="left:493px;top:936px;width:17px;height:15px;background:#4b4b4b;"></div>
<svg style="left:498px;top:939px;" width="7" height="10" viewBox="0 0 7 10"><path d="M0.500 0.500 V9.500 L6 5 Z" fill="#e0e0e0"/></svg>
<svg style="left:513px;top:937px;" width="10" height="12" viewBox="0 0 10 12"><path d="M6.45 2.5 L2.95 6 L6.45 9.5" fill="none" stroke="#a4a4a4" stroke-width="1.2"/></svg>
<svg style="left:1276px;top:937px;" width="10" height="12" viewBox="0 0 10 12"><path d="M3.55 2.5 L7.05 6 L3.55 9.5" fill="none" stroke="#a4a4a4" stroke-width="1.2"/></svg>
<div style="left:878px;top:937px;width:26px;height:13px;background:#6a6a6a;border-radius:7px;"></div>
<div style="left:1290px;top:935px;width:16px;height:17px;background:#535353;"></div>
<div style="left:78px;top:951px;width:1228px;height:1px;background:#3a3a3a;"></div>
<div style="left:1308px;top:68px;width:39px;height:884px;background:#535353;border:1px solid #3a3a3a;box-sizing:border-box;"></div>
<div style="left:1309px;top:69px;width:38px;height:11px;background:#424242;"></div>
<div style="left:1309px;top:80px;width:37px;height:1px;background:#3a3a3a;"></div>
<svg style="left:1333px;top:72px;" width="8" height="5" viewBox="0 0 8 5"><path d="M3 0 L0.800 2.500 L3 5 M7 0 L4.800 2.500 L7 5" fill="none" stroke="#e0e0e0" stroke-width="1.3"/></svg>
<div style="left:1309px;top:149px;width:37px;height:1px;background:#3a3a3a;"></div>
<div style="left:1309px;top:218px;width:37px;height:1px;background:#3a3a3a;"></div>
<div style="left:1309px;top:287px;width:37px;height:1px;background:#3a3a3a;"></div>
<div style="left:1309px;top:356px;width:37px;height:1px;background:#3a3a3a;"></div>
<div style="left:1309px;top:397px;width:37px;height:1px;background:#3a3a3a;"></div>
<div style="left:1309px;top:438px;width:37px;height:1px;background:#3a3a3a;"></div>
<svg style="left:1318px;top:84px;" width="20" height="4" viewBox="0 0 20 4"><rect x="0" y="0" width="1" height="4" fill="#3c3c3c"/><rect x="2" y="0" width="1" height="4" fill="#3c3c3c"/><rect x="4" y="0" width="1" height="4" fill="#3c3c3c"/><rect x="6" y="0" width="1" height="4" fill="#3c3c3c"/><rect x="8" y="0" width="1" height="4" fill="#3c3c3c"/><rect x="10" y="0" width="1" height="4" fill="#3c3c3c"/><rect x="12" y="0" width="1" height="4" fill="#3c3c3c"/><rect x="14" y="0" width="1" height="4" fill="#3c3c3c"/><rect x="16" y="0" width="1" height="4" fill="#3c3c3c"/><rect x="18" y="0" width="1" height="4" fill="#3c3c3c"/></svg>
<svg style="left:1318px;top:153px;" width="20" height="4" viewBox="0 0 20 4"><rect x="0" y="0" width="1" height="4" fill="#3c3c3c"/><rect x="2" y="0" width="1" height="4" fill="#3c3c3c"/><rect x="4" y="0" width="1" height="4" fill="#3c3c3c"/><rect x="6" y="0" width="1" height="4" fill="#3c3c3c"/><rect x="8" y="0" width="1" height="4" fill="#3c3c3c"/><rect x="10" y="0" width="1" height="4" fill="#3c3c3c"/><rect x="12" y="0" width="1" height="4" fill="#3c3c3c"/><rect x="14" y="0" width="1" height="4" fill="#3c3c3c"/><rect x="16" y="0" width="1" height="4" fill="#3c3c3c"/><rect x="18" y="0" width="1" height="4" fill="#3c3c3c"/></svg>
<svg style="left:1318px;top:222px;" width="20" height="4" viewBox="0 0 20 4"><rect x="0" y="0" width="1" height="4" fill="#3c3c3c"/><rect x="2" y="0" width="1" height="4" fill="#3c3c3c"/><rect x="4" y="0" width="1" height="4" fill="#3c3c3c"/><rect x="6" y="0" width="1" height="4" fill="#3c3c3c"/><rect x="8" y="0" width="1" height="4" fill="#3c3c3c"/><rect x="10" y="0" width="1" height="4" fill="#3c3c3c"/><rect x="12" y="0" width="1" height="4" fill="#3c3c3c"/><rect x="14" y="0" width="1" height="4" fill="#3c3c3c"/><rect x="16" y="0" width="1" height="4" fill="#3c3c3c"/><rect x="18" y="0" width="1" height="4" fill="#3c3c3c"/></svg>
<svg style="left:1318px;top:291px;" width="20" height="4" viewBox="0 0 20 4"><rect x="0" y="0" width="1" height="4" fill="#3c3c3c"/><rect x="2" y="0" width="1" height="4" fill="#3c3c3c"/><rect x="4" y="0" width="1" height="4" fill="#3c3c3c"/><rect x="6" y="0" width="1" height="4" fill="#3c3c3c"/><rect x="8" y="0" width="1" height="4" fill="#3c3c3c"/><rect x="10" y="0" width="1" height="4" fill="#3c3c3c"/><rect x="12" y="0" width="1" height="4" fill="#3c3c3c"/><rect x="14" y="0" width="1" height="4" fill="#3c3c3c"/><rect x="16" y="0" width="1" height="4" fill="#3c3c3c"/><rect x="18" y="0" width="1" height="4" fill="#3c3c3c"/></svg>
<svg style="left:1318px;top:360px;" width="20" height="4" viewBox="0 0 20 4"><rect x="0" y="0" width="1" height="4" fill="#3c3c3c"/><rect x="2" y="0" width="1" height="4" fill="#3c3c3c"/><rect x="4" y="0" width="1" height="4" fill="#3c3c3c"/><rect x="6" y="0" width="1" height="4" fill="#3c3c3c"/><rect x="8" y="0" width="1" height="4" fill="#3c3c3c"/><rect x="10" y="0" width="1" height="4" fill="#3c3c3c"/><rect x="12" y="0" width="1" height="4" fill="#3c3c3c"/><rect x="14" y="0" width="1" height="4" fill="#3c3c3c"/><rect x="16" y="0" width="1" height="4" fill="#3c3c3c"/><rect x="18" y="0" width="1" height="4" fill="#3c3c3c"/></svg>
<svg style="left:1318px;top:401px;" width="20" height="4" viewBox="0 0 20 4"><rect x="0" y="0" width="1" height="4" fill="#3c3c3c"/><rect x="2" y="0" width="1" height="4" fill="#3c3c3c"/><rect x="4" y="0" width="1" height="4" fill="#3c3c3c"/><rect x="6" y="0" width="1" height="4" fill="#3c3c3c"/><rect x="8" y="0" width="1" height="4" fill="#3c3c3c"/><rect x="10" y="0" width="1" height="4" fill="#3c3c3c"/><rect x="12" y="0" width="1" height="4" fill="#3c3c3c"/><rect x="14" y="0" width="1" height="4" fill="#3c3c3c"/><rect x="16" y="0" width="1" height="4" fill="#3c3c3c"/><rect x="18" y="0" width="1" height="4" fill="#3c3c3c"/></svg>
<div style="left:1314px;top:93px;width:27px;height:22px;background:#2e2e2e;border-radius:3px;"></div>
<svg style="left:1316px;top:92px;" width="24" height="24" viewBox="0 0 24 24"><circle cx="12" cy="12" r="8.500" fill="none" stroke="#c8c8c8" stroke-width="1.2" stroke-dasharray="2.200 1.600"/><circle cx="12" cy="12" r="6" fill="#c8c8c8"/></svg>
<svg style="left:1316px;top:120px;" width="24" height="24" viewBox="0 0 24 24"><path d="M4 20 V4 C13 4 20 11 20 20 Z" fill="#c8c8c8"/><path d="M4 20 L10 5.500 M4 20 L15 9 M4 20 L18.500 14" stroke="#8a8a8a" stroke-width="1"/></svg>
<svg style="left:1316px;top:161.5px;" width="24" height="24" viewBox="0 0 24 24"><path d="M4.500 2 V22" stroke="#c8c8c8" stroke-width="1.2"/><rect x="7" y="5" width="9" height="5.500" fill="#c8c8c8"/><rect x="7" y="13" width="14" height="5.500" fill="#c8c8c8"/></svg>
<svg style="left:1316px;top:189.5px;" width="24" height="24" viewBox="0 0 24 24"><rect x="5" y="4.500" width="10" height="10" fill="#c8c8c8"/><rect x="10" y="9.500" width="10" height="10" fill="#c8c8c8"/><rect x="10" y="9.500" width="5" height="5" fill="#c8c8c8" stroke="#535353" stroke-width="1.400"/></svg>
<svg style="left:1316px;top:230px;" width="24" height="24" viewBox="0 0 24 24"><path d="M7 13 H17 L16 22 H8 Z" fill="#c8c8c8"/><path d="M11 13 V5 M11 5 L10 1.500 L12.500 3.500 Z M13.500 13 L17 6 M15.500 4 C18 3 20 5 19 8 C18 6 17 6 15.500 7 Z M8.500 13 L6 6.500 M4.500 8 C3.500 5 5 3.500 7.500 4 C7 5.500 7.500 6.500 6.500 7.500 Z" stroke="#c8c8c8" fill="#c8c8c8" stroke-width="1.6"/></svg>
<svg style="left:1316px;top:258px;" width="24" height="24" viewBox="0 0 24 24"><circle cx="12" cy="8" r="3.800" fill="#c8c8c8"/><circle cx="8" cy="13.500" r="3.800" fill="#c8c8c8"/><circle cx="16" cy="13.500" r="3.800" fill="#c8c8c8"/><path d="M11.200 11 H12.800 L13.300 18.500 L15.500 20.500 H8.500 L10.700 18.500 Z" fill="#c8c8c8"/></svg>
<svg style="left:1316px;top:299px;" width="24" height="24" viewBox="0 0 24 24"><text x="10" y="15" font-family="Liberation Sans,sans-serif" font-size="16" font-weight="bold" fill="#c8c8c8">A</text><rect x="3.500" y="12.500" width="5" height="5" fill="none" stroke="#c8c8c8" stroke-width="1.2"/><rect x="6" y="15" width="5" height="5" fill="#535353" stroke="#c8c8c8" stroke-width="1.2"/></svg>
<svg style="left:1316px;top:327.5px;" width="24" height="24" viewBox="0 0 24 24"><text x="10.500" y="14" font-family="Liberation Sans,sans-serif" font-size="15" font-weight="bold" fill="#c8c8c8">¶</text><rect x="3.500" y="12.500" width="5" height="5" fill="none" stroke="#c8c8c8" stroke-width="1.2"/><rect x="6" y="15" width="5" height="5" fill="#535353" stroke="#c8c8c8" stroke-width="1.2"/></svg>
<svg style="left:1316px;top:368px;" width="24" height="24" viewBox="0 0 24 24"><text x="3" y="19.500" font-family="Liberation Serif,serif" font-style="italic" font-weight="bold" font-size="21" fill="#c8c8c8">A</text></svg>
<svg style="left:1316px;top:409.5px;" width="24" height="24" viewBox="0 0 24 24"><path d="M11 5.500 H4.500 V19.500 H18.500 V13" fill="none" stroke="#c8c8c8" stroke-width="1.800"/><path d="M11 13 L19 5 M13 4.500 H19.500 V11" fill="none" stroke="#c8c8c8" stroke-width="1.800"/></svg>
<div style="left:1347px;top:68px;width:1px;height:884px;background:#484848;"></div>
<div style="left:1348px;top:68px;width:247px;height:884px;background:#535353;border:1px solid #3a3a3a;box-sizing:border-box;"></div>
<div style="left:1346px;top:69px;width:248px;height:11px;background:#424242;"></div>
<div style="left:1347px;top:80px;width:247px;height:1px;background:#3a3a3a;"></div>
<svg style="left:1581px;top:72px;" width="8" height="5" viewBox="0 0 8 5"><path d="M1 0 L3.200 2.500 L1 5 M5 0 L7.200 2.500 L5 5" fill="none" stroke="#e0e0e0" stroke-width="1.3"/></svg>
<div style="left:1349px;top:81px;width:245px;height:26px;background:#424242;"></div>
<div style="left:1349px;top:107px;width:245px;height:1px;background:#3a3a3a;"></div>
<div style="left:1390px;top:81px;width:1px;height:26px;background:#3a3a3a;"></div>
<div class="fs" style="left:1350px;top:87.5px;font-size:12px;line-height:17px;color:#9aa0a6;width:41px;text-align:center;">画板</div>
<div style="left:1433px;top:81px;width:1px;height:26px;background:#3a3a3a;"></div>
<div class="fs" style="left:1392px;top:87.5px;font-size:12px;line-height:17px;color:#9aa0a6;width:42px;text-align:center;">链接</div>
<div style="left:1434px;top:81px;width:42px;height:27px;background:#535353;"></div>
<div style="left:1476px;top:81px;width:1px;height:26px;background:#3a3a3a;"></div>
<div style="left:1433px;top:81px;width:1px;height:26px;background:#3a3a3a;"></div>
<div class="fs" style="left:1435px;top:87.5px;font-size:12px;line-height:17px;color:#f0f0f0;width:42px;text-align:center;">图层</div>
<svg style="left:1578px;top:91px;" width="10" height="8" viewBox="0 0 10 8"><rect x="0" y="0" width="10" height="1" fill="#cfcfcf"/><rect x="0" y="2" width="10" height="1" fill="#cfcfcf"/><rect x="0" y="4" width="10" height="1" fill="#cfcfcf"/><rect x="0" y="6" width="10" height="1" fill="#cfcfcf"/></svg>
<div style="left:1355px;top:115px;width:234px;height:146px;border:1px solid #5e5e5e;box-sizing:border-box;border-radius:3px;"></div>
<div style="left:1355px;top:115px;width:234px;height:20px;background:#4f6680;border-radius:3px 3px 0 0;"></div>
<div style="left:1375px;top:116px;width:1px;height:19px;background:#5d738c;"></div>
<div style="left:1552px;top:116px;width:1px;height:19px;background:#5d738c;"></div>
<svg style="left:1357.5px;top:119px;" width="14" height="10" viewBox="0 0 14 10"><path d="M0.500 5 C3 0.800 11 0.800 13.500 5 C11 9.200 3 9.200 0.500 5 Z" fill="#e0e0e0"/><circle cx="7" cy="5" r="2.600" fill="#4f6680"/><circle cx="7" cy="5" r="1.200" fill="#e0e0e0"/></svg>
<div style="left:1398px;top:116px;width:3px;height:19px;background:#4f80ff;"></div>
<svg style="left:1406.5px;top:118.5px;" width="10" height="12" viewBox="0 0 10 12"><path d="M3.55 2.5 L7.05 6 L3.55 9.5" fill="none" stroke="#f0f0f0" stroke-width="1.5"/></svg>
<div style="left:1427px;top:116px;width:18px;height:18px;background:#000;border-radius:1px;"></div>
<svg style="left:1427px;top:116px;" width="18" height="18" viewBox="0 0 18 18"><rect x="4.500" y="4.500" width="9.500" height="3.500" fill="#e4e4e4"/><rect x="4.500" y="8.800" width="9.500" height="1.500" fill="#808080"/><rect x="1" y="1" width="2.600" height="16" fill="#fff"/><rect x="14.600" y="1" width="2.600" height="16" fill="#fff"/></svg>
<div class="fr" style="left:1450px;top:118px;font-size:12px;line-height:17px;color:#f0f0f0;word-spacing:3px;">图层 1</div>
<svg style="left:1557px;top:120px;" width="11" height="11" viewBox="0 0 11 11"><circle cx="5.500" cy="5.500" r="3.800" fill="none" stroke="#e0e0e0" stroke-width="1.2"/></svg>
<div style="left:1573px;top:122px;width:6px;height:6px;background:#4f80ff;border:1px solid #000;box-sizing:border-box;"></div>
<svg style="left:1582px;top:116px;" width="6" height="6" viewBox="0 0 6 6"><path d="M0 0 H6 V6 Z" fill="#d8d8d8"/></svg>
<div class="fr" style="left:1354px;top:263px;font-size:12px;line-height:17px;color:#c8c8c8;word-spacing:3px;">1 个图层</div>
<svg style="left:1450px;top:263px;" width="14" height="14" viewBox="0 0 14 14"><circle cx="8.500" cy="5.500" r="3.800" fill="none" stroke="#c8c8c8" stroke-width="1.500"/><path d="M5.800 8.200 L1.500 12.500" stroke="#c8c8c8" stroke-width="2"/></svg>
<svg style="left:1476px;top:264px;" width="12" height="12" viewBox="0 0 12 12"><rect x="1" y="1" width="7" height="7" fill="none" stroke="#c8c8c8" stroke-width="1.400"/><rect x="4.500" y="4.500" width="6.500" height="6.500" fill="#7a7a7a" stroke="#c8c8c8" stroke-width="1.200"/></svg>
<svg style="left:1501px;top:264px;" width="15" height="11" viewBox="0 0 15 11"><path d="M5 1 H15 V10 H9 V5 L5 5 Z" fill="#c8c8c8"/><path d="M0.500 1 V4 H4 M2.500 2 L4.500 4 L2.500 6" fill="none" stroke="#c8c8c8" stroke-width="1.200"/></svg>
<svg style="left:1529px;top:265px;" width="10" height="10" viewBox="0 0 10 10"><path d="M0 0 H10 V10 H4 V5 L0 5 Z" fill="#cfcfcf"/><path d="M0 5.5 L3.5 9 V5.5 Z" fill="#cfcfcf"/></svg>
<svg style="left:1554px;top:262px;" width="11" height="15" viewBox="0 0 11 15"><g fill="none" stroke="#6e6e6e" stroke-width="1"><path d="M0 3.5 H11 M3.5 3.5 V1.5 H7.5 V3.5 M1.5 3.5 V13.5 H9.5 V3.5 M3.5 5.5 V11.5 M5.5 5.5 V11.5 M7.5 5.5 V11.5"/></g></svg>
<div style="left:1349px;top:280px;width:245px;height:3px;background:#3f3f3f;"></div>
<div style="left:1349px;top:280px;width:245px;height:1px;background:#3a3a3a;"></div>
<div style="left:1349px;top:282px;width:245px;height:1px;background:#3a3a3a;"></div>
<div style="left:1349px;top:283px;width:245px;height:26px;background:#424242;"></div>
<div style="left:1349px;top:309px;width:245px;height:1px;background:#3a3a3a;"></div>
<div style="left:1390px;top:283px;width:1px;height:26px;background:#3a3a3a;"></div>
<div class="fs" style="left:1350px;top:289.5px;font-size:12px;line-height:17px;color:#9aa0a6;width:41px;text-align:center;">描边</div>
<div style="left:1433px;top:283px;width:1px;height:26px;background:#3a3a3a;"></div>
<div class="fs" style="left:1392px;top:289.5px;font-size:12px;line-height:17px;color:#9aa0a6;width:42px;text-align:center;">色板</div>
<div style="left:1434px;top:283px;width:65px;height:27px;background:#535353;"></div>
<div style="left:1499px;top:283px;width:1px;height:26px;background:#3a3a3a;"></div>
<div style="left:1433px;top:283px;width:1px;height:26px;background:#3a3a3a;"></div>
<div class="fs" style="left:1435px;top:289.5px;font-size:12px;line-height:17px;color:#f0f0f0;width:65px;text-align:center;">图形样式</div>
<svg style="left:1578px;top:293px;" width="10" height="8" viewBox="0 0 10 8"><rect x="0" y="0" width="10" height="1" fill="#cfcfcf"/><rect x="0" y="2" width="10" height="1" fill="#cfcfcf"/><rect x="0" y="4" width="10" height="1" fill="#cfcfcf"/><rect x="0" y="6" width="10" height="1" fill="#cfcfcf"/></svg>
<div style="left:1355px;top:316px;width:234px;height:56px;border:1px solid #5e5e5e;box-sizing:border-box;border-radius:2px;"></div>
<div style="left:1355px;top:317px;width:32px;height:32px;background:#e9e9e9;"></div>
<div style="left:1388px;top:317px;width:32px;height:32px;background:#e9e9e9;"></div>
<div style="left:1421px;top:317px;width:32px;height:32px;background:#e9e9e9;"></div>
<div style="left:1454px;top:317px;width:32px;height:32px;background:#e9e9e9;"></div>
<div style="left:1487px;top:317px;width:32px;height:32px;background:#e9e9e9;"></div>
<div style="left:1520px;top:317px;width:32px;height:32px;background:#e9e9e9;"></div>
<div style="left:1359px;top:321px;width:24px;height:24px;background:#fff;border:1px solid #8a8a8a;box-sizing:border-box;"></div>
<svg style="left:1357px;top:334px;" width="12" height="12" viewBox="0 0 12 12"><rect x="4.500" y="4.500" width="6" height="6" fill="#fff" stroke="#000" stroke-width="1.500"/><rect x="1" y="1" width="6" height="6" fill="#fff" stroke="#000" stroke-width="1"/></svg>
<div style="left:1394px;top:323px;width:18px;height:18px;background:#fff;border:1px solid #bbb;box-sizing:border-box;box-shadow:2px 2px 2px #aaa;"></div>
<svg style="left:1392px;top:337px;" width="9" height="9" viewBox="0 0 9 9"><rect x="0.500" y="0.500" width="8" height="8" fill="#fff" stroke="#000"/><path d="M1 8 L8 1" stroke="#f00" stroke-width="1.500"/></svg>
<div style="left:1425px;top:321px;width:24px;height:24px;background:#fff;border:1px solid #8a8a8a;box-sizing:border-box;"></div>
<div style="left:1459px;top:327px;width:12px;height:12px;background:#fff;border:1px solid #bbb;box-sizing:border-box;"></div>
<div style="left:1470px;top:327px;width:12px;height:12px;background:#fff;border:1px solid #bbb;box-sizing:border-box;"></div>
<svg style="left:1458px;top:337px;" width="9" height="9" viewBox="0 0 9 9"><rect x="0.500" y="0.500" width="8" height="8" fill="#fff" stroke="#000"/><path d="M1 8 L8 1" stroke="#f00" stroke-width="1.500"/></svg>
<div style="left:1491px;top:321px;width:24px;height:24px;background:linear-gradient(135deg,#cfcfcf,#e6e6e6 50%,#b5b5b5);box-shadow:inset 0 0 4px #999;"></div>
<div style="left:1524px;top:321px;width:24px;height:24px;background:radial-gradient(circle at 50% 20%,#cfeeff,#4fb0f0 55%,#1f7fd0);"></div>
<div style="left:1355px;top:350px;width:32px;height:21px;background:#e9e9e9;"></div>
<div style="left:1388px;top:350px;width:32px;height:21px;background:#e9e9e9;"></div>
<div style="left:1359px;top:354px;width:24px;height:17px;background:linear-gradient(120deg,#3f9f10,#e8e020 30%,#4fb010 50%,#f0e020 70%,#3f9f10);"></div>
<div style="left:1392px;top:354px;width:24px;height:17px;background:radial-gradient(circle at 40% 50%,#1d4f5f 20%,#3f9fcf 45%,#1d4f4f 70%,#3f9fcf);"></div>
<div style="left:1576px;top:317px;width:12px;height:54px;background:#4c4c4c;"></div>
<svg style="left:1576px;top:318px;" width="12" height="10" viewBox="0 0 12 10"><path d="M3 6.2 L6 3.2 L9 6.2" fill="none" stroke="#bdbdbd" stroke-width="1.2"/></svg>
<svg style="left:1576px;top:359px;" width="12" height="10" viewBox="0 0 12 10"><path d="M3 3.8 L6 6.8 L9 3.8" fill="none" stroke="#bdbdbd" stroke-width="1.2"/></svg>
<svg style="left:1359px;top:376px;" width="16" height="12" viewBox="0 0 16 12"><path d="M1.300 0.500 V10 M4.700 0.500 V10 M7.500 1 L10.500 10" stroke="#c8c8c8" stroke-width="2.200"/><path d="M12 9 H16 L14 11.500 Z" fill="#c8c8c8"/></svg>
<svg style="left:1501px;top:375px;" width="16" height="13" viewBox="0 0 16 13"><g fill="none" stroke="#6e6e6e" stroke-width="1.500"><path d="M7 4 H4.500 a2.500 2.500 0 0 0 0 5 H7 M9 4 H11.500 a2.500 2.500 0 0 1 0 5 H9 M3 1 L13 12"/></g></svg>
<svg style="left:1529px;top:376.5px;" width="10" height="10" viewBox="0 0 10 10"><path d="M0 0 H10 V10 H4 V5 L0 5 Z" fill="#cfcfcf"/><path d="M0 5.5 L3.5 9 V5.5 Z" fill="#cfcfcf"/></svg>
<svg style="left:1554px;top:374px;" width="11" height="15" viewBox="0 0 11 15"><g fill="none" stroke="#6e6e6e" stroke-width="1"><path d="M0 3.5 H11 M3.5 3.5 V1.5 H7.5 V3.5 M1.5 3.5 V13.5 H9.5 V3.5 M3.5 5.5 V11.5 M5.5 5.5 V11.5 M7.5 5.5 V11.5"/></g></svg>
<div style="left:1349px;top:391px;width:245px;height:3px;background:#3f3f3f;"></div>
<div style="left:1349px;top:391px;width:245px;height:1px;background:#3a3a3a;"></div>
<div style="left:1349px;top:393px;width:245px;height:1px;background:#3a3a3a;"></div>
<div style="left:1349px;top:394px;width:245px;height:26px;background:#424242;"></div>
<div style="left:1349px;top:420px;width:245px;height:1px;background:#3a3a3a;"></div>
<div style="left:1390px;top:394px;width:1px;height:26px;background:#3a3a3a;"></div>
<div class="fs" style="left:1350px;top:400.5px;font-size:12px;line-height:17px;color:#9aa0a6;width:41px;text-align:center;">颜色</div>
<div style="left:1444px;top:394px;width:1px;height:26px;background:#3a3a3a;"></div>
<div class="fs" style="left:1392px;top:400.5px;font-size:12px;line-height:17px;color:#9aa0a6;width:53px;text-align:center;">透明度</div>
<div style="left:1445px;top:394px;width:47px;height:27px;background:#535353;"></div>
<div style="left:1492px;top:394px;width:1px;height:26px;background:#3a3a3a;"></div>
<div style="left:1444px;top:394px;width:1px;height:26px;background:#3a3a3a;"></div>
<div class="fs" style="left:1459px;top:400.5px;font-size:12px;line-height:17px;color:#f0f0f0;width:27px;text-align:center;">渐变</div>
<svg style="left:1449px;top:403px;" width="7" height="10" viewBox="0 0 7 10"><path d="M1.200 3.500 L3.500 1 L5.800 3.500 M1.200 6.500 L3.500 9 L5.800 6.500" fill="none" stroke="#d0d0d0" stroke-width="1.1"/></svg>
<svg style="left:1578px;top:404px;" width="10" height="8" viewBox="0 0 10 8"><rect x="0" y="0" width="10" height="1" fill="#cfcfcf"/><rect x="0" y="2" width="10" height="1" fill="#cfcfcf"/><rect x="0" y="4" width="10" height="1" fill="#cfcfcf"/><rect x="0" y="6" width="10" height="1" fill="#cfcfcf"/></svg>
<div style="left:1354px;top:427px;width:32px;height:32px;background:linear-gradient(90deg,#fff,#2e2422);border:1px solid #2a2a2a;box-sizing:border-box;"></div>
<svg style="left:1388px;top:441px;" width="6" height="4" viewBox="0 0 6 4"><path d="M0 0 H6 L3 3.500 Z" fill="#c8c8c8"/></svg>
<div class="fr" style="left:1404px;top:431px;font-size:12px;line-height:17px;color:#e0e0e0;">类型 :</div>
<div style="left:1440px;top:427px;width:149px;height:21px;background:#454545;border:1px solid #626262;box-sizing:border-box;border-radius:3px;"></div>
<svg style="left:1573px;top:433px;" width="12" height="10" viewBox="0 0 12 10"><path d="M2.5 3.55 L6 7.05 L9.5 3.55" fill="none" stroke="#e6e6e6" stroke-width="1.6"/></svg>
<div class="fr" style="left:1404px;top:456px;font-size:12px;line-height:17px;color:#737373;">描边 :</div>
<div style="left:1440px;top:453px;width:68px;height:22px;background:#585858;border:1px solid #626262;box-sizing:border-box;border-radius:3px;"></div>
<div style="left:1462px;top:454px;width:1px;height:20px;background:#5e5e5e;"></div>
<div style="left:1485px;top:454px;width:1px;height:20px;background:#5e5e5e;"></div>
<svg style="left:1443px;top:457px;" width="16" height="14" viewBox="0 0 16 14"><path d="M1 13 V1 H15 V5 H6 V13 Z" fill="#6a6a6a"/></svg>
<svg style="left:1466px;top:457px;" width="16" height="14" viewBox="0 0 16 14"><path d="M1 13 V1 H15 V5 H6 V13 Z" fill="#6a6a6a"/></svg>
<svg style="left:1488px;top:457px;" width="16" height="14" viewBox="0 0 16 14"><path d="M1 13 V1 H15 V5 H6 V13 Z" fill="#6a6a6a"/></svg>
<div style="left:1365px;top:474px;width:20px;height:20px;background:#fff;border:1px solid #222;box-sizing:border-box;"></div>
<div style="left:1371px;top:480px;width:8px;height:8px;background:#535353;border:1px solid #222;box-sizing:border-box;"></div>
<svg style="left:1365px;top:474px;" width="20" height="20" viewBox="0 0 20 20"><path d="M1 19 L19 1" stroke="#f00" stroke-width="1.800"/></svg>
<div style="left:1356px;top:465px;width:18px;height:18px;background:#ebebeb;border:1px solid #fff;box-sizing:border-box;box-shadow:0 0 0 0.6px #3a3a3a;"></div>
<svg style="left:1421px;top:483px;" width="15" height="13" viewBox="0 0 15 13"><path d="M1 12 H14 M1 12 L10 1.500 M9 12 A7 7 0 0 0 6.500 6" fill="none" stroke="#bdbdbd" stroke-width="1.200"/></svg>
<div style="left:1440px;top:480px;width:70px;height:21px;background:#5c5c5c;border-radius:3px;"></div>
<svg style="left:1493px;top:486px;" width="12" height="10" viewBox="0 0 12 10"><path d="M3 3.8 L6 6.8 L9 3.8" fill="none" stroke="#7c7c7c" stroke-width="1.2"/></svg>
<svg style="left:1419px;top:508px;" width="18" height="16" viewBox="0 0 18 16"><ellipse cx="11" cy="7" rx="5" ry="3.500" fill="none" stroke="#bdbdbd" stroke-width="1.200"/><path d="M2.500 1 V12 M0.500 3 L2.500 1 L4.500 3 M0.500 10 L2.500 12 L4.500 10 M6 11 V15 M16 11 V15 M6 13 H16" fill="none" stroke="#bdbdbd" stroke-width="1.100"/></svg>
<div style="left:1440px;top:506px;width:70px;height:21px;background:#5c5c5c;border-radius:3px;"></div>
<svg style="left:1493px;top:512px;" width="12" height="10" viewBox="0 0 12 10"><path d="M3 3.8 L6 6.8 L9 3.8" fill="none" stroke="#7c7c7c" stroke-width="1.2"/></svg>
<svg style="left:1362px;top:505px;" width="17" height="14" viewBox="0 0 17 14"><rect x="1.500" y="0.500" width="8" height="5" fill="#6a6a6a" stroke="#7a7a7a"/><rect x="6.500" y="8.500" width="8" height="5" fill="#6a6a6a" stroke="#7a7a7a"/><path d="M11 2 H15 L13 4.500 Z M0.500 11.500 H4.500 L2.500 9 Z" fill="#7a7a7a"/></svg>
<div style="left:1359px;top:540px;width:200px;height:19px;background:linear-gradient(90deg,#fff,#2a201e);border:1px solid #2a2a2a;box-sizing:border-box;"></div>
<svg style="left:1572px;top:544px;" width="11" height="15" viewBox="0 0 11 15"><g fill="none" stroke="#6e6e6e" stroke-width="1"><path d="M0 3.5 H11 M3.5 3.5 V1.5 H7.5 V3.5 M1.5 3.5 V13.5 H9.5 V3.5 M3.5 5.5 V11.5 M5.5 5.5 V11.5 M7.5 5.5 V11.5"/></g></svg>
<div class="fr" style="left:1380px;top:589px;font-size:12px;line-height:17px;color:#737373;">不透明度 :</div>
<div style="left:1440px;top:585px;width:70px;height:21px;background:#5c5c5c;border-radius:3px;"></div>
<svg style="left:1493px;top:591px;" width="12" height="10" viewBox="0 0 12 10"><path d="M3 3.8 L6 6.8 L9 3.8" fill="none" stroke="#7c7c7c" stroke-width="1.2"/></svg>
<div class="fr" style="left:1404px;top:615px;font-size:12px;line-height:17px;color:#737373;">位置 :</div>
<div style="left:1440px;top:611px;width:70px;height:21px;background:#5c5c5c;border-radius:3px;"></div>
<svg style="left:1493px;top:617px;" width="12" height="10" viewBox="0 0 12 10"><path d="M3 3.8 L6 6.8 L9 3.8" fill="none" stroke="#7c7c7c" stroke-width="1.2"/></svg>
<div style="left:1349px;top:637px;width:245px;height:3px;background:#3f3f3f;"></div>
<div style="left:1349px;top:637px;width:245px;height:1px;background:#3a3a3a;"></div>
<div style="left:1349px;top:639px;width:245px;height:1px;background:#3a3a3a;"></div>
<div style="left:1349px;top:640px;width:245px;height:26px;background:#424242;"></div>
<div style="left:1349px;top:666px;width:245px;height:1px;background:#3a3a3a;"></div>
<div style="left:1349px;top:640px;width:48px;height:27px;background:#535353;"></div>
<div style="left:1397px;top:640px;width:1px;height:26px;background:#3a3a3a;"></div>
<div class="fs" style="left:1363px;top:646.5px;font-size:12px;line-height:17px;color:#f0f0f0;width:28px;text-align:center;">变换</div>
<svg style="left:1353px;top:649px;" width="7" height="10" viewBox="0 0 7 10"><path d="M1.200 3.500 L3.500 1 L5.800 3.500 M1.200 6.500 L3.500 9 L5.800 6.500" fill="none" stroke="#d0d0d0" stroke-width="1.1"/></svg>
<svg style="left:1578px;top:650px;" width="10" height="8" viewBox="0 0 10 8"><rect x="0" y="0" width="10" height="1" fill="#cfcfcf"/><rect x="0" y="2" width="10" height="1" fill="#cfcfcf"/><rect x="0" y="4" width="10" height="1" fill="#cfcfcf"/><rect x="0" y="6" width="10" height="1" fill="#cfcfcf"/></svg>
<svg style="left:1354px;top:687px;" width="19" height="19" viewBox="0 0 19 19"><path d="M5 2.5 H7 M12 2.5 H14 M2.5 5 V7 M2.5 12 V14" stroke="#d0d0d0" stroke-width="1"/><path d="M5 9.5 H7 M12 9.5 H14 M9.5 5 V7 M9.5 12 V14" stroke="#d0d0d0" stroke-width="1"/><path d="M5 16.5 H7 M12 16.5 H14 M16.5 5 V7 M16.5 12 V14" stroke="#d0d0d0" stroke-width="1"/><rect x="0.5" y="0.5" width="4" height="4" fill="none" stroke="#d0d0d0" stroke-width="1"/><rect x="7.5" y="0.5" width="4" height="4" fill="none" stroke="#d0d0d0" stroke-width="1"/><rect x="14.5" y="0.5" width="4" height="4" fill="none" stroke="#d0d0d0" stroke-width="1"/><rect x="0.5" y="7.5" width="4" height="4" fill="none" stroke="#d0d0d0" stroke-width="1"/><rect x="7.5" y="7.5" width="4" height="4" fill="none" stroke="#d0d0d0" stroke-width="1"/><rect x="8.0" y="8.0" width="3" height="3" fill="#fff"/><rect x="14.5" y="7.5" width="4" height="4" fill="none" stroke="#d0d0d0" stroke-width="1"/><rect x="0.5" y="14.5" width="4" height="4" fill="none" stroke="#d0d0d0" stroke-width="1"/><rect x="7.5" y="14.5" width="4" height="4" fill="none" stroke="#d0d0d0" stroke-width="1"/><rect x="14.5" y="14.5" width="4" height="4" fill="none" stroke="#d0d0d0" stroke-width="1"/></svg>
<div class="fr" style="left:1385px;top:677px;font-size:12px;line-height:16px;color:#c4c8cc;">X:</div>
<div style="left:1400px;top:673px;width:58px;height:21px;background:#454545;border:1px solid #626262;box-sizing:border-box;border-radius:3px;"></div>
<div class="fs" style="left:1404px;top:674px;font-size:11px;line-height:16px;color:#f4f4f4;letter-spacing:0.3px;">350.776</div>
<div class="fr" style="left:1452px;top:676px;width:3px;height:16px;overflow:hidden;font-size:12px;line-height:16px;color:#f4f4f4;font-weight:500;">px</div>
<div class="fr" style="left:1464px;top:677px;font-size:12px;line-height:16px;color:#c4c8cc;">宽 :</div>
<div style="left:1487px;top:673px;width:58px;height:21px;background:#454545;border:1px solid #626262;box-sizing:border-box;border-radius:3px;"></div>
<div class="fs" style="left:1491px;top:674px;font-size:11px;line-height:16px;color:#f4f4f4;letter-spacing:0.3px;">599.294</div>
<div class="fr" style="left:1539px;top:676px;width:3px;height:16px;overflow:hidden;font-size:12px;line-height:16px;color:#f4f4f4;font-weight:500;">px</div>
<div class="fr" style="left:1385px;top:703px;font-size:12px;line-height:16px;color:#c4c8cc;">Y:</div>
<div style="left:1400px;top:699px;width:58px;height:21px;background:#454545;border:1px solid #626262;box-sizing:border-box;border-radius:3px;"></div>
<div class="fs" style="left:1404px;top:700px;font-size:11px;line-height:16px;color:#f4f4f4;letter-spacing:0.3px;">313.829</div>
<div class="fr" style="left:1452px;top:702px;width:3px;height:16px;overflow:hidden;font-size:12px;line-height:16px;color:#f4f4f4;font-weight:500;">px</div>
<div class="fr" style="left:1464px;top:703px;font-size:12px;line-height:16px;color:#c4c8cc;">高 :</div>
<div style="left:1487px;top:699px;width:58px;height:21px;background:#454545;border:1px solid #626262;box-sizing:border-box;border-radius:3px;"></div>
<div class="fs" style="left:1491px;top:700px;font-size:11px;line-height:16px;color:#f4f4f4;letter-spacing:0.3px;">241.942</div>
<div class="fr" style="left:1539px;top:702px;width:3px;height:16px;overflow:hidden;font-size:12px;line-height:16px;color:#f4f4f4;font-weight:500;">px</div>
<svg style="left:1552px;top:686px;" width="18" height="20" viewBox="0 0 18 20"><g fill="none" stroke="#c8c8c8" stroke-width="1.800"><path d="M6.500 8 V5.500 a3 3 0 0 1 6 0 V8 M6.500 11 V14 a3 3 0 0 0 6 0 V11 M2 2 L16 17"/></g></svg>
<svg style="left:1381px;top:729px;" width="13" height="12" viewBox="0 0 13 12"><path d="M12 10.500 H1 L9 1.500 M8 10.500 A6 6 0 0 0 5.800 6" fill="none" stroke="#bdbdbd" stroke-width="1.200"/></svg>
<div class="fr" style="left:1395px;top:728px;font-size:12px;line-height:16px;color:#c4c8cc;">:</div>
<div style="left:1400px;top:725px;width:57px;height:21px;background:#454545;border:1px solid #626262;box-sizing:border-box;border-radius:3px;"></div>
<div style="left:1438px;top:726px;width:1px;height:19px;background:#626262;"></div>
<div class="fs" style="left:1404px;top:726px;font-size:11px;line-height:16px;color:#f4f4f4;letter-spacing:0.3px;">0°</div>
<svg style="left:1441px;top:731px;" width="12" height="10" viewBox="0 0 12 10"><path d="M2.5 3.55 L6 7.05 L9.5 3.55" fill="none" stroke="#e6e6e6" stroke-width="1.6"/></svg>
<svg style="left:1464px;top:730px;" width="11" height="10" viewBox="0 0 11 10"><path d="M3.500 0.500 H10.500 L7.500 9.500 H0.500 Z" fill="#bdbdbd"/></svg>
<div class="fr" style="left:1476px;top:728px;font-size:12px;line-height:16px;color:#c4c8cc;">:</div>
<div style="left:1481px;top:725px;width:57px;height:21px;background:#454545;border:1px solid #626262;box-sizing:border-box;border-radius:3px;"></div>
<div style="left:1519px;top:726px;width:1px;height:19px;background:#626262;"></div>
<div class="fs" style="left:1485px;top:726px;font-size:11px;line-height:16px;color:#f4f4f4;letter-spacing:0.3px;">0°</div>
<svg style="left:1522px;top:731px;" width="12" height="10" viewBox="0 0 12 10"><path d="M2.5 3.55 L6 7.05 L9.5 3.55" fill="none" stroke="#e6e6e6" stroke-width="1.6"/></svg>
<div style="left:1349px;top:751px;width:245px;height:3px;background:#3f3f3f;"></div>
<div style="left:1349px;top:751px;width:245px;height:1px;background:#3a3a3a;"></div>
<div style="left:1349px;top:753px;width:245px;height:1px;background:#3a3a3a;"></div>
<div style="left:1349px;top:754px;width:245px;height:26px;background:#424242;"></div>
<div style="left:1349px;top:780px;width:245px;height:1px;background:#3a3a3a;"></div>
<div style="left:1349px;top:754px;width:48px;height:27px;background:#535353;"></div>
<div style="left:1397px;top:754px;width:1px;height:26px;background:#3a3a3a;"></div>
<div class="fs" style="left:1363px;top:760.5px;font-size:12px;line-height:17px;color:#f0f0f0;width:28px;text-align:center;">字符</div>
<svg style="left:1353px;top:763px;" width="7" height="10" viewBox="0 0 7 10"><path d="M1.200 3.500 L3.500 1 L5.800 3.500 M1.200 6.500 L3.500 9 L5.800 6.500" fill="none" stroke="#d0d0d0" stroke-width="1.1"/></svg>
<div style="left:1439px;top:754px;width:1px;height:26px;background:#3a3a3a;"></div>
<div class="fs" style="left:1398px;top:760.5px;font-size:12px;line-height:17px;color:#9aa0a6;width:42px;text-align:center;">段落</div>
<div style="left:1517px;top:754px;width:1px;height:26px;background:#3a3a3a;"></div>
<div class="fs" style="left:1441px;top:760.5px;font-size:12px;line-height:17px;color:#9aa0a6;width:77px;text-align:center;letter-spacing:0.400px;">OpenType</div>
<svg style="left:1578px;top:764px;" width="10" height="8" viewBox="0 0 10 8"><rect x="0" y="0" width="10" height="1" fill="#cfcfcf"/><rect x="0" y="2" width="10" height="1" fill="#cfcfcf"/><rect x="0" y="4" width="10" height="1" fill="#cfcfcf"/><rect x="0" y="6" width="10" height="1" fill="#cfcfcf"/></svg>
<div style="left:1354px;top:787px;width:114px;height:22px;background:#555;border:1px solid #6a6a6a;box-sizing:border-box;border-radius:3px;"></div>
<svg style="left:1362px;top:790px;" width="18" height="16" viewBox="0 0 18 16"><g fill="#d0d0d0"><circle cx="1.500" cy="1.500" r="1.700"/><circle cx="14.500" cy="1.500" r="1.700"/><circle cx="1.500" cy="14.500" r="1.700"/><circle cx="14.500" cy="14.500" r="1.700"/></g><path d="M1.500 1.500 H14.500 V14.500 H1.500 Z" fill="none" stroke="#d0d0d0"/><path d="M4.500 4 H11.500 V6 H10.500 V5 H8.700 V11 H9.800 V12 H6.200 V11 H7.300 V5 H5.500 V6 H4.500 Z" fill="#d0d0d0"/></svg>
<div class="fr" style="left:1386px;top:791px;font-size:12px;line-height:17px;color:#e8e8e8;font-weight:bold;">修饰文字工具</div>
<div style="left:1354px;top:815px;width:220px;height:20px;background:#454545;border:1px solid #626262;box-sizing:border-box;border-radius:3px;"></div>
<div style="left:1554px;top:816px;width:1px;height:18px;background:#626262;"></div>
<svg style="left:1357px;top:818px;" width="16" height="14" viewBox="0 0 16 14"><circle cx="8" cy="5" r="3.500" fill="none" stroke="#d0d0d0" stroke-width="1.300"/><path d="M5.500 7.500 L1 12" stroke="#d0d0d0" stroke-width="1.600"/><path d="M11 10 H15 L13 12.500 Z" fill="#d0d0d0"/></svg>
<div class="fr" style="left:1380px;top:816px;font-size:12px;line-height:17px;color:#f4f4f4;letter-spacing:0.550px;font-weight:400;">Adobe 宋体 Std L</div>
<svg style="left:1558px;top:820px;" width="12" height="10" viewBox="0 0 12 10"><path d="M2.5 3.55 L6 7.05 L9.5 3.55" fill="none" stroke="#e6e6e6" stroke-width="1.6"/></svg>
<div style="left:1354px;top:840px;width:235px;height:20px;background:#454545;border:1px solid #626262;box-sizing:border-box;border-radius:3px;"></div>
<div style="left:1570px;top:841px;width:1px;height:18px;background:#626262;"></div>
<div class="fr" style="left:1361px;top:842px;font-size:12px;line-height:17px;color:#f4f4f4;">-</div>
<svg style="left:1573px;top:845.5px;" width="12" height="10" viewBox="0 0 12 10"><path d="M2.5 3.55 L6 7.05 L9.5 3.55" fill="none" stroke="#e6e6e6" stroke-width="1.6"/></svg>
<div style="left:1354px;top:866px;width:235px;height:1px;background:#484848;"></div>
<div style="left:1375px;top:874px;width:80px;height:20px;background:#454545;border:1px solid #626262;box-sizing:border-box;border-radius:3px;"></div>
<div style="left:1393px;top:875px;width:1px;height:18px;background:#626262;"></div>
<div style="left:1437px;top:875px;width:1px;height:18px;background:#626262;"></div>
<svg style="left:1378.5px;top:874.5px;" width="12" height="10" viewBox="0 0 12 10"><path d="M2.8 6.3 L6 3.1 L9.2 6.3" fill="none" stroke="#e6e6e6" stroke-width="1.4"/></svg>
<svg style="left:1378.5px;top:883.5px;" width="12" height="10" viewBox="0 0 12 10"><path d="M2.8 3.6999999999999997 L6 6.8999999999999995 L9.2 3.6999999999999997" fill="none" stroke="#e6e6e6" stroke-width="1.4"/></svg>
<div class="fr" style="left:1397px;top:874px;font-size:12px;line-height:17px;color:#f4f4f4;letter-spacing:1.100px;font-weight:400;">12 pt</div>
<svg style="left:1440px;top:879.5px;" width="12" height="10" viewBox="0 0 12 10"><path d="M2.5 3.55 L6 7.05 L9.5 3.55" fill="none" stroke="#e6e6e6" stroke-width="1.6"/></svg>
<div style="left:1508px;top:874px;width:81px;height:20px;background:#454545;border:1px solid #626262;box-sizing:border-box;border-radius:3px;"></div>
<div style="left:1526px;top:875px;width:1px;height:18px;background:#626262;"></div>
<div style="left:1570px;top:875px;width:1px;height:18px;background:#626262;"></div>
<svg style="left:1511px;top:874.5px;" width="12" height="10" viewBox="0 0 12 10"><path d="M2.8 6.3 L6 3.1 L9.2 6.3" fill="none" stroke="#e6e6e6" stroke-width="1.4"/></svg>
<svg style="left:1511px;top:883.5px;" width="12" height="10" viewBox="0 0 12 10"><path d="M2.8 3.6999999999999997 L6 6.8999999999999995 L9.2 3.6999999999999997" fill="none" stroke="#e6e6e6" stroke-width="1.4"/></svg>
<div class="fr" style="left:1532px;top:874px;font-size:12px;line-height:17px;color:#f4f4f4;letter-spacing:0.400px;font-weight:400;">(14.4</div>
<svg style="left:1573px;top:879.5px;" width="12" height="10" viewBox="0 0 12 10"><path d="M2.5 3.55 L6 7.05 L9.5 3.55" fill="none" stroke="#e6e6e6" stroke-width="1.6"/></svg>
<div class="fr" style="left:1566px;top:876px;width:3px;height:16px;overflow:hidden;font-size:12px;line-height:16px;color:#f4f4f4;font-weight:500;">px</div>
<div style="left:1375px;top:900px;width:80px;height:20px;background:#454545;border:1px solid #626262;box-sizing:border-box;border-radius:3px;"></div>
<div style="left:1393px;top:901px;width:1px;height:18px;background:#626262;"></div>
<div style="left:1437px;top:901px;width:1px;height:18px;background:#626262;"></div>
<svg style="left:1378.5px;top:900.5px;" width="12" height="10" viewBox="0 0 12 10"><path d="M2.8 6.3 L6 3.1 L9.2 6.3" fill="none" stroke="#e6e6e6" stroke-width="1.4"/></svg>
<svg style="left:1378.5px;top:909.5px;" width="12" height="10" viewBox="0 0 12 10"><path d="M2.8 3.6999999999999997 L6 6.8999999999999995 L9.2 3.6999999999999997" fill="none" stroke="#e6e6e6" stroke-width="1.4"/></svg>
<div class="fs" style="left:1397px;top:901px;font-size:11px;line-height:16px;color:#f4f4f4;letter-spacing:-1px;">100%</div>
<svg style="left:1440px;top:905.5px;" width="12" height="10" viewBox="0 0 12 10"><path d="M2.5 3.55 L6 7.05 L9.5 3.55" fill="none" stroke="#e6e6e6" stroke-width="1.6"/></svg>
<div style="left:1508px;top:900px;width:81px;height:20px;background:#454545;border:1px solid #626262;box-sizing:border-box;border-radius:3px;"></div>
<div style="left:1526px;top:901px;width:1px;height:18px;background:#626262;"></div>
<div style="left:1570px;top:901px;width:1px;height:18px;background:#626262;"></div>
<svg style="left:1511px;top:900.5px;" width="12" height="10" viewBox="0 0 12 10"><path d="M2.8 6.3 L6 3.1 L9.2 6.3" fill="none" stroke="#e6e6e6" stroke-width="1.4"/></svg>
<svg style="left:1511px;top:909.5px;" width="12" height="10" viewBox="0 0 12 10"><path d="M2.8 3.6999999999999997 L6 6.8999999999999995 L9.2 3.6999999999999997" fill="none" stroke="#e6e6e6" stroke-width="1.4"/></svg>
<div class="fs" style="left:1530px;top:901px;font-size:11px;line-height:16px;color:#f4f4f4;letter-spacing:-1px;">100%</div>
<svg style="left:1573px;top:905.5px;" width="12" height="10" viewBox="0 0 12 10"><path d="M2.5 3.55 L6 7.05 L9.5 3.55" fill="none" stroke="#e6e6e6" stroke-width="1.6"/></svg>
<div style="left:1375px;top:925px;width:80px;height:20px;background:#454545;border:1px solid #626262;box-sizing:border-box;border-radius:3px;"></div>
<div style="left:1393px;top:926px;width:1px;height:18px;background:#626262;"></div>
<div style="left:1437px;top:926px;width:1px;height:18px;background:#626262;"></div>
<svg style="left:1378.5px;top:925.5px;" width="12" height="10" viewBox="0 0 12 10"><path d="M2.8 6.3 L6 3.1 L9.2 6.3" fill="none" stroke="#e6e6e6" stroke-width="1.4"/></svg>
<svg style="left:1378.5px;top:934.5px;" width="12" height="10" viewBox="0 0 12 10"><path d="M2.8 3.6999999999999997 L6 6.8999999999999995 L9.2 3.6999999999999997" fill="none" stroke="#e6e6e6" stroke-width="1.4"/></svg>
<div class="fs" style="left:1397px;top:927px;font-size:12px;line-height:17px;color:#f4f4f4;">自动</div>
<svg style="left:1440px;top:930.5px;" width="12" height="10" viewBox="0 0 12 10"><path d="M2.5 3.55 L6 7.05 L9.5 3.55" fill="none" stroke="#e6e6e6" stroke-width="1.6"/></svg>
<div style="left:1508px;top:925px;width:81px;height:20px;background:#454545;border:1px solid #626262;box-sizing:border-box;border-radius:3px;"></div>
<div style="left:1526px;top:926px;width:1px;height:18px;background:#626262;"></div>
<div style="left:1570px;top:926px;width:1px;height:18px;background:#626262;"></div>
<svg style="left:1511px;top:925.5px;" width="12" height="10" viewBox="0 0 12 10"><path d="M2.8 6.3 L6 3.1 L9.2 6.3" fill="none" stroke="#e6e6e6" stroke-width="1.4"/></svg>
<svg style="left:1511px;top:934.5px;" width="12" height="10" viewBox="0 0 12 10"><path d="M2.8 3.6999999999999997 L6 6.8999999999999995 L9.2 3.6999999999999997" fill="none" stroke="#e6e6e6" stroke-width="1.4"/></svg>
<div class="fs" style="left:1530px;top:926px;font-size:11px;line-height:16px;color:#f4f4f4;letter-spacing:0.3px;">0</div>
<svg style="left:1573px;top:930.5px;" width="12" height="10" viewBox="0 0 12 10"><path d="M2.5 3.55 L6 7.05 L9.5 3.55" fill="none" stroke="#e6e6e6" stroke-width="1.6"/></svg>
<svg style="left:1354px;top:874px;" width="20" height="20" viewBox="0 0 20 20"><text x="0" y="17" font-family="Liberation Serif,serif" font-weight="bold" font-size="11" fill="#c8c8c8">T</text><text x="6" y="17" font-family="Liberation Serif,serif" font-weight="bold" font-size="18" fill="#c8c8c8">T</text></svg>
<svg style="left:1354px;top:900px;" width="20" height="20" viewBox="0 0 20 20"><path d="M2.500 3 V17 M0.500 5 L2.500 3 L4.500 5 M0.500 15 L2.500 17 L4.500 15" fill="none" stroke="#c8c8c8" stroke-width="1.100"/><text x="6" y="17" font-family="Liberation Serif,serif" font-weight="bold" font-size="18" fill="#c8c8c8">T</text></svg>
<svg style="left:1354px;top:925px;" width="22" height="20" viewBox="0 0 22 20"><text x="0" y="14" font-family="Liberation Sans,sans-serif" font-size="13" letter-spacing="-1.500" fill="#c8c8c8">V/A</text><path d="M17 17.500 H9 M11 15.500 L9 17.500 L11 19.500" fill="none" stroke="#c8c8c8" stroke-width="1.100"/></svg>
<svg style="left:1487px;top:874px;" width="20" height="20" viewBox="0 0 20 20"><path d="M2.500 9 V19 M0.500 11 L2.500 9 L4.500 11 M0.500 17 L2.500 19 L4.500 17" fill="none" stroke="#c8c8c8" stroke-width="1.100"/><text x="7" y="9" font-family="Liberation Sans,sans-serif" font-size="10" fill="#c8c8c8">A</text><text x="7" y="19" font-family="Liberation Sans,sans-serif" font-size="10" fill="#c8c8c8">A</text><path d="M6 10 H16 M6 19.500 H16" stroke="#c8c8c8" stroke-width="0.800"/></svg>
<svg style="left:1487px;top:900px;" width="20" height="20" viewBox="0 0 20 20"><text x="2" y="13" font-family="Liberation Serif,serif" font-weight="bold" font-size="17" fill="#c8c8c8">T</text><path d="M0.500 17 H17.500 M2.500 15 L0.500 17 L2.500 19 M15.500 15 L17.500 17 L15.500 19" fill="none" stroke="#c8c8c8" stroke-width="1.100"/></svg>
<svg style="left:1487px;top:926px;" width="20" height="20" viewBox="0 0 20 20"><rect x="0" y="0" width="18" height="11" fill="#c8c8c8"/><text x="1" y="10.500" font-family="Liberation Sans,sans-serif" font-size="12" letter-spacing="-1" fill="#535353">VA</text><path d="M0.500 16 H17.500 M2.500 14 L0.500 16 L2.500 18 M15.500 14 L17.500 16 L15.500 18" fill="none" stroke="#c8c8c8" stroke-width="1.100"/></svg>
<div style="left:1066px;top:78px;width:242px;height:182px;background:#535353;border:1px solid #3a3a3a;box-sizing:border-box;box-shadow:0 1px 4px rgba(0,0,0,0.35);"></div>
<div style="left:1067px;top:79px;width:240px;height:3px;background:#3f3f3f;"></div>
<div style="left:1067px;top:82px;width:240px;height:26px;background:#424242;"></div>
<div style="left:1067px;top:108px;width:240px;height:1px;background:#3a3a3a;"></div>
<div style="left:1067px;top:82px;width:42px;height:27px;background:#535353;"></div>
<div style="left:1109px;top:82px;width:1px;height:26px;background:#3a3a3a;"></div>
<div style="left:1174px;top:82px;width:1px;height:26px;background:#3a3a3a;"></div>
<div class="fs" style="left:1068px;top:88.5px;font-size:12px;line-height:17px;color:#f0f0f0;width:42px;text-align:center;">外观</div>
<div class="fs" style="left:1111px;top:88.5px;font-size:12px;line-height:17px;color:#9aa0a6;width:64px;text-align:center;">颜色参考</div>
<svg style="left:1267px;top:92px;" width="10" height="8" viewBox="0 0 10 8"><path d="M1 0.500 L3.800 3.700 L1 7 M5.500 0.500 L8.300 3.700 L5.500 7" fill="none" stroke="#e0e0e0" stroke-width="1.300"/></svg>
<div style="left:1283px;top:90px;width:1px;height:11px;background:#bdbdbd;"></div>
<svg style="left:1291px;top:92px;" width="10" height="8" viewBox="0 0 10 8"><rect x="0" y="0" width="10" height="1" fill="#cfcfcf"/><rect x="0" y="2" width="10" height="1" fill="#cfcfcf"/><rect x="0" y="4" width="10" height="1" fill="#cfcfcf"/><rect x="0" y="6" width="10" height="1" fill="#cfcfcf"/></svg>
<div style="left:1072px;top:115px;width:230px;height:117px;border:1px solid #5e5e5e;box-sizing:border-box;border-radius:3px;"></div>
<div style="left:1073px;top:140px;width:228px;height:1px;background:#5e5e5e;"></div>
<div style="left:1073px;top:165px;width:228px;height:1px;background:#5e5e5e;"></div>
<div style="left:1073px;top:190px;width:228px;height:1px;background:#5e5e5e;"></div>
<div style="left:1075px;top:118px;width:20px;height:20px;background:#fff;border:1px solid #2a2a2a;box-sizing:border-box;border-radius:2px;"></div>
<div class="fr" style="left:1123px;top:122px;font-size:12px;line-height:17px;color:#e8e8e8;font-weight:bold;">编组</div>
<div class="fr" style="left:1123px;top:147px;font-size:12px;line-height:17px;color:#e8e8e8;">内容</div>
<svg style="left:1077.5px;top:173px;" width="14" height="10" viewBox="0 0 14 10"><path d="M0.500 5 C3 0.800 11 0.800 13.500 5 C11 9.200 3 9.200 0.500 5 Z" fill="#6e6e6e"/><circle cx="7" cy="5" r="2.600" fill="#535353"/><circle cx="7" cy="5" r="1.200" fill="#6e6e6e"/></svg>
<div style="left:1097px;top:166px;width:1px;height:24px;background:#3a3a3a;"></div>
<div class="fr" style="left:1123px;top:172px;font-size:12px;line-height:17px;color:#e8e8e8;">不透明度 :</div>
<div style="left:1123px;top:185px;width:57px;height:0;border-top:1px dotted #c8c8c8;"></div>
<div class="fr" style="left:1184px;top:172px;font-size:12px;line-height:17px;color:#e8e8e8;">默认值</div>
<div style="left:1079px;top:236px;width:11px;height:11px;border:2px solid #d8d8d8;box-sizing:border-box;"></div>
<div style="left:1105px;top:236px;width:11px;height:11px;background:#bdbdbd;border:1px solid #d8d8d8;box-sizing:border-box;box-shadow:inset 0 0 0 1px #535353;"></div>
<div class="fs" style="left:1130px;top:233px;font-size:13px;line-height:18px;color:#d8d8d8;"><i>fx</i></div>
<svg style="left:1143px;top:243px;" width="4" height="3" viewBox="0 0 4 3"><path d="M0 0 H4 L2 2.500 Z" fill="#d0d0d0"/></svg>
<svg style="left:1215px;top:235px;" width="13" height="13" viewBox="0 0 13 13"><circle cx="6.500" cy="6.500" r="5" fill="none" stroke="#707070" stroke-width="2"/><path d="M3 3 L10 10" stroke="#707070" stroke-width="2"/></svg>
<svg style="left:1243px;top:236.5px;" width="10" height="10" viewBox="0 0 10 10"><path d="M0 0 H10 V10 H4 V5 L0 5 Z" fill="#6e6e6e"/><path d="M0 5.5 L3.5 9 V5.5 Z" fill="#6e6e6e"/></svg>
<svg style="left:1268px;top:234px;" width="11" height="15" viewBox="0 0 11 15"><g fill="none" stroke="#6e6e6e" stroke-width="1"><path d="M0 3.5 H11 M3.5 3.5 V1.5 H7.5 V3.5 M1.5 3.5 V13.5 H9.5 V3.5 M3.5 5.5 V11.5 M5.5 5.5 V11.5 M7.5 5.5 V11.5"/></g></svg>
<div style="left:1067px;top:251px;width:240px;height:1px;background:#3a3a3a;"></div>
<div style="left:1067px;top:252px;width:240px;height:7px;background:#4a4a4a;"></div>
<svg style="left:1176px;top:253px;" width="20" height="4" viewBox="0 0 20 4"><rect x="0" y="0" width="1" height="4" fill="#3a3a3a"/><rect x="2" y="0" width="1" height="4" fill="#3a3a3a"/><rect x="4" y="0" width="1" height="4" fill="#3a3a3a"/><rect x="6" y="0" width="1" height="4" fill="#3a3a3a"/><rect x="8" y="0" width="1" height="4" fill="#3a3a3a"/><rect x="10" y="0" width="1" height="4" fill="#3a3a3a"/><rect x="12" y="0" width="1" height="4" fill="#3a3a3a"/><rect x="14" y="0" width="1" height="4" fill="#3a3a3a"/><rect x="16" y="0" width="1" height="4" fill="#3a3a3a"/><rect x="18" y="0" width="1" height="4" fill="#3a3a3a"/></svg>
<div style="left:0px;top:952px;width:1599px;height:2px;background:#505050;"></div>
<svg style="left:0px;top:0px;" width="6" height="6" viewBox="0 0 6 6"><path d="M0 0 H6 C2.500 0.500 0.500 2.500 0 6 Z" fill="#000"/></svg>
<svg style="left:1593px;top:0px;" width="6" height="6" viewBox="0 0 6 6"><path d="M6 0 H0 C3.500 0.500 5.500 2.500 6 6 Z" fill="#000"/></svg>
<div style="left:0px;top:0px;width:1599px;height:1px;background:#000;"></div>
<div style="left:0px;top:0px;width:1px;height:956px;background:#111;"></div>
<div style="left:1597px;top:0px;width:2px;height:956px;background:#111;"></div>
<div style="left:0px;top:954px;width:1599px;height:2px;background:#000;"></div>
</div></body></html>
